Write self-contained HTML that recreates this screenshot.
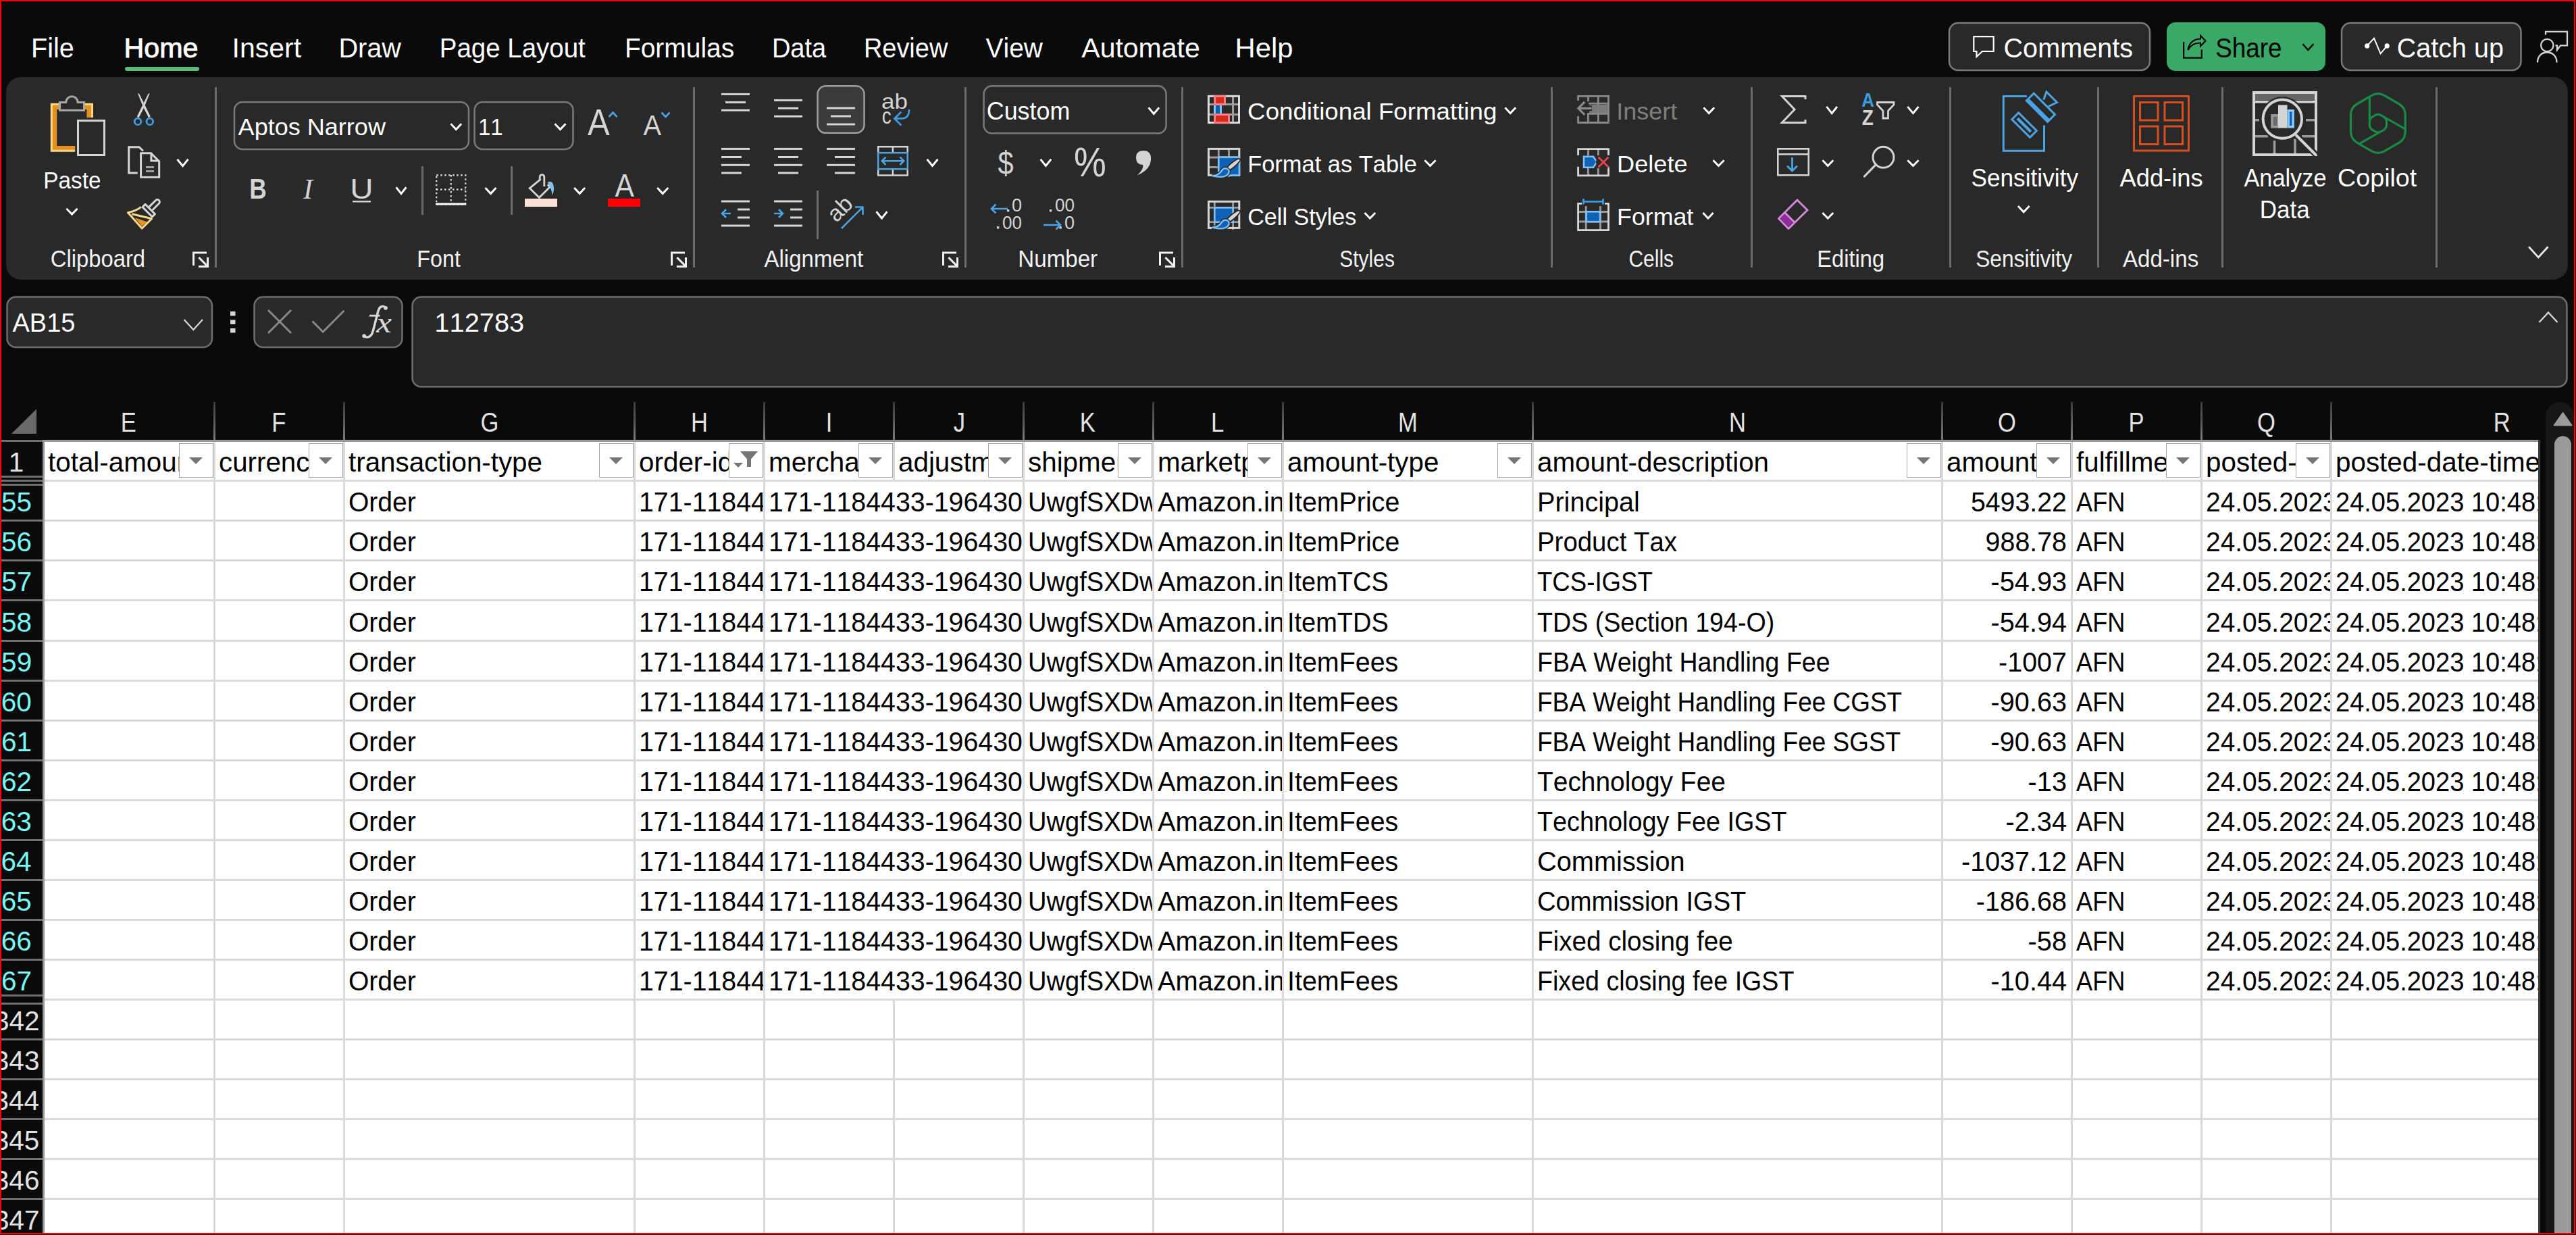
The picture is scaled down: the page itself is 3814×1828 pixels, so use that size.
<!DOCTYPE html>
<html><head><meta charset="utf-8"><style>
html,body{margin:0;padding:0;background:#0a0a0a;width:3814px;height:1828px;overflow:hidden}
svg{display:block;font-family:"Liberation Sans",sans-serif;font-kerning:none}
text{white-space:pre}
</style></head><body>
<svg width="3814" height="1828" viewBox="0 0 3814 1828">
<rect x="0" y="0" width="3814" height="1828" fill="#0a0a0a" />
<rect x="9" y="114" width="3793" height="300" rx="22" fill="#292929"/>
<text x="46.06" y="85.10" font-size="40.99" fill="#ffffff" textLength="63.70" lengthAdjust="spacingAndGlyphs" >File</text>
<text x="343.62" y="85.10" font-size="40.99" fill="#ffffff" >Insert</text>
<text x="501.45" y="85.10" font-size="40.99" fill="#ffffff" textLength="92.45" lengthAdjust="spacingAndGlyphs" >Draw</text>
<text x="650.85" y="85.10" font-size="40.99" fill="#ffffff" textLength="215.94" lengthAdjust="spacingAndGlyphs" >Page Layout</text>
<text x="924.91" y="85.10" font-size="40.99" fill="#ffffff" textLength="162.30" lengthAdjust="spacingAndGlyphs" >Formulas</text>
<text x="1142.88" y="85.10" font-size="40.99" fill="#ffffff" textLength="80.32" lengthAdjust="spacingAndGlyphs" >Data</text>
<text x="1278.89" y="85.10" font-size="40.99" fill="#ffffff" textLength="124.42" lengthAdjust="spacingAndGlyphs" >Review</text>
<text x="1459.53" y="85.10" font-size="40.99" fill="#ffffff" textLength="84.38" lengthAdjust="spacingAndGlyphs" >View</text>
<text x="1601.32" y="85.10" font-size="40.99" fill="#ffffff" >Automate</text>
<text x="1828.57" y="85.10" font-size="40.99" fill="#ffffff" textLength="85.88" lengthAdjust="spacingAndGlyphs" >Help</text>
<text x="183.42" y="85.10" font-size="39.83" fill="#ffffff" textLength="110.02" lengthAdjust="spacingAndGlyphs" stroke="#ffffff" stroke-width="0.9">Home</text>
<rect x="185" y="99" width="110" height="6" rx="3" fill="#5fb97a"/>
<rect x="2886" y="34" width="297" height="70" rx="13" fill="#292929" stroke="#7a7a7a" stroke-width="2.5"/>
<text x="2966.49" y="84.70" font-size="40.70" fill="#fff" textLength="191.54" lengthAdjust="spacingAndGlyphs" >Comments</text>
<path d="M2922.3 54.2 H2951.7 V76 H2935 L2926.5 84 V76 H2922.3 Z" fill="none" stroke="#fff" stroke-width="2.2"/>
<rect x="3208" y="33" width="235" height="72" rx="13" fill="#3aa866"/>
<text x="3280.23" y="84.70" font-size="40.70" fill="#000" textLength="98.41" lengthAdjust="spacingAndGlyphs" >Share</text>
<path d="M3233.1 62 V85.6 H3259.8 V73.5" fill="none" stroke="#000" stroke-width="2.2"/>
<path d="M3239.5 74 C3241 62 3250 57.5 3258 57.5 V52.5 L3265.5 60.5 L3258 68.5 V63.5 C3250 63.5 3243 67 3239.5 74 Z" fill="none" stroke="#000" stroke-width="2" stroke-linejoin="miter"/>
<path d="M3410.2 66.0 L3417.3 74.0 L3424.5 66.0" fill="none" stroke="#000" stroke-width="2.4" stroke-linecap="square" stroke-linejoin="miter"/>
<rect x="3467" y="34" width="265.5" height="70" rx="13" fill="#292929" stroke="#7a7a7a" stroke-width="2.5"/>
<text x="3548.69" y="84.80" font-size="39.97" fill="#fff" textLength="158.27" lengthAdjust="spacingAndGlyphs" >Catch up</text>
<path d="M3504.7 67.9 L3515 56.6 L3524.6 79.3 L3534.2 67.9" fill="none" stroke="#fff" stroke-width="2"/>
<circle cx="3504.7" cy="67.9" r="3.6" fill="#fff"/><circle cx="3534.2" cy="67.9" r="3.6" fill="#fff"/>
<g fill="none" stroke="#d6d6d6" stroke-width="2.3"><circle cx="3771.3" cy="67" r="9.2"/><path d="M3757 92.5 C3757 83 3763 77.5 3771.3 77.5 C3779.5 77.5 3785.5 83 3785.5 92.5"/><path d="M3769 51.5 V46.8 H3801 V67.3 H3791 L3786 74 V67.3 H3783.5"/></g>
<rect x="318" y="129" width="3" height="267" fill="#6b6b6b" />
<rect x="1026" y="129" width="3" height="267" fill="#6b6b6b" />
<rect x="1428" y="129" width="3" height="267" fill="#6b6b6b" />
<rect x="1749" y="129" width="3" height="267" fill="#6b6b6b" />
<rect x="2296" y="129" width="3" height="267" fill="#6b6b6b" />
<rect x="2592" y="129" width="3" height="267" fill="#6b6b6b" />
<rect x="2886" y="129" width="3" height="267" fill="#6b6b6b" />
<rect x="3105" y="129" width="3" height="267" fill="#6b6b6b" />
<rect x="3289" y="129" width="3" height="267" fill="#6b6b6b" />
<rect x="3606" y="129" width="3" height="267" fill="#6b6b6b" />
<rect x="624" y="246" width="3" height="72" fill="#6b6b6b" />
<rect x="756" y="246" width="3" height="72" fill="#6b6b6b" />
<rect x="1209" y="282" width="3" height="72" fill="#6b6b6b" />
<text x="74.84" y="395.00" font-size="34.30" fill="#f2f2f2" textLength="140.28" lengthAdjust="spacingAndGlyphs" >Clipboard</text>
<text x="617.36" y="395.00" font-size="34.30" fill="#f2f2f2" textLength="64.48" lengthAdjust="spacingAndGlyphs" >Font</text>
<text x="1131.54" y="395.00" font-size="34.30" fill="#f2f2f2" textLength="146.71" lengthAdjust="spacingAndGlyphs" >Alignment</text>
<text x="1507.28" y="395.00" font-size="34.30" fill="#f2f2f2" textLength="117.87" lengthAdjust="spacingAndGlyphs" >Number</text>
<text x="1983.34" y="395.00" font-size="34.30" fill="#f2f2f2" textLength="81.54" lengthAdjust="spacingAndGlyphs" >Styles</text>
<text x="2411.48" y="395.00" font-size="34.30" fill="#f2f2f2" textLength="66.60" lengthAdjust="spacingAndGlyphs" >Cells</text>
<text x="2690.32" y="395.00" font-size="34.30" fill="#f2f2f2" textLength="99.78" lengthAdjust="spacingAndGlyphs" >Editing</text>
<text x="2925.16" y="395.00" font-size="34.30" fill="#f2f2f2" textLength="142.90" lengthAdjust="spacingAndGlyphs" >Sensitivity</text>
<text x="3142.94" y="395.00" font-size="34.30" fill="#f2f2f2" textLength="112.26" lengthAdjust="spacingAndGlyphs" >Add-ins</text>
<path d="M286.5 393.0 V374.0 H306.0" fill="none" stroke="#f0f0f0" stroke-width="3" stroke-linejoin="miter"/>
<path d="M294.4 381.1 L307.0 393.7" stroke="#f0f0f0" stroke-width="3"/>
<path d="M307.5 381.0 V394.5 H293.9" fill="none" stroke="#f0f0f0" stroke-width="3" stroke-linejoin="miter"/>
<path d="M994.5 393.0 V374.0 H1014.0" fill="none" stroke="#f0f0f0" stroke-width="3" stroke-linejoin="miter"/>
<path d="M1002.4 381.1 L1015.0 393.7" stroke="#f0f0f0" stroke-width="3"/>
<path d="M1015.5 381.0 V394.5 H1001.9" fill="none" stroke="#f0f0f0" stroke-width="3" stroke-linejoin="miter"/>
<path d="M1396.5 393.0 V374.0 H1416.0" fill="none" stroke="#f0f0f0" stroke-width="3" stroke-linejoin="miter"/>
<path d="M1404.4 381.1 L1417.0 393.7" stroke="#f0f0f0" stroke-width="3"/>
<path d="M1417.5 381.0 V394.5 H1403.9" fill="none" stroke="#f0f0f0" stroke-width="3" stroke-linejoin="miter"/>
<path d="M1717.5 393.0 V374.0 H1737.0" fill="none" stroke="#f0f0f0" stroke-width="3" stroke-linejoin="miter"/>
<path d="M1725.4 381.1 L1738.0 393.7" stroke="#f0f0f0" stroke-width="3"/>
<path d="M1738.5 381.0 V394.5 H1724.9" fill="none" stroke="#f0f0f0" stroke-width="3" stroke-linejoin="miter"/>
<path d="M74.8 152.7 H138 V174 H128.7 V162 H84.1 V216 H111.1 V224.8 H74.8 Z" fill="#f8d98a"/>
<path d="M77.8 155.7 H135 V174 H128.7 V162 H84.1 V216 H111.1 V221.8 H77.8 Z" fill="#e3901f"/>
<path d="M88.5 163.2 V151.5 H97.7 A8.7 8.7 0 0 1 115.1 151.5 H124.5 V163.2 Z" fill="#292929" stroke="#a8a8a8" stroke-width="3"/>
<rect x="115.5" y="178.5" width="39" height="51" fill="#292929" stroke="#d4d4d4" stroke-width="3"/>
<text x="64.27" y="278.70" font-size="35.90" fill="#fff" textLength="85.21" lengthAdjust="spacingAndGlyphs" >Paste</text>
<path d="M99.5 309.9 L106.5 317.1 L113.5 309.9" fill="none" stroke="#fff" stroke-width="2.9" stroke-linecap="square" stroke-linejoin="miter"/>
<path d="M203.8 137.8 L206.2 139 L215 156.5 L222.8 172.6 L220.2 174.4 L211.6 157.6 Z" fill="#d6d6d6"/>
<path d="M221.8 137.8 L219.4 139 L210.6 156.5 L202.8 172.6 L205.4 174.4 L214 157.6 Z" fill="#d6d6d6"/>
<g fill="none" stroke="#3d9be0" stroke-width="2.9"><circle cx="204" cy="179.9" r="4.8"/><circle cx="221.8" cy="179.9" r="4.8"/></g>
<path d="M203.7 256 H190.7 V217.7 H206 L212 223.5" fill="none" stroke="#d6d6d6" stroke-width="3"/>
<path d="M208.6 226.7 H223.5 L235.7 238.9 V262.3 H208.6 Z" fill="none" stroke="#d6d6d6" stroke-width="3"/>
<path d="M223.9 226 V238 H236" fill="none" stroke="#d6d6d6" stroke-width="3"/>
<path d="M216 247.5 H228 M216 253.5 H228" stroke="#a0a0a0" stroke-width="2.8"/>
<path d="M263.4 236.9 L270.5 245.6 L277.6 236.9" fill="none" stroke="#fff" stroke-width="2.9" stroke-linecap="square" stroke-linejoin="miter"/>
<g transform="translate(220.2 311.65) rotate(-45)" fill="none" stroke-linejoin="round"><path d="M-21.7 -5.5 L-14.1 10 L-23 8.9 Z" fill="#e8941f" stroke="#e8941f" stroke-width="1"/><path d="M-4.35 -11.7 Q-13 -12.5 -23.9 -19.6 L-25.7 11.6 L-4.35 11.7 M-21.2 -14 L-5.1 12" stroke="#f5d88a" stroke-width="3"/><rect x="-2.85" y="-10.2" width="5.7" height="20.4" stroke="#d6d6d6" stroke-width="3"/><path d="M4.35 -3.4 H18.1 A3.4 3.4 0 0 1 18.1 3.4 H4.35" stroke="#d6d6d6" stroke-width="3"/></g>
<rect x="347" y="151" width="347" height="70" rx="12" fill="#292929" stroke="#7a7a7a" stroke-width="2.5"/>
<text x="352.63" y="200.40" font-size="35.76" fill="#fff" textLength="218.28" lengthAdjust="spacingAndGlyphs" >Aptos Narrow</text>
<path d="M668.5 184.4 L675.3 191.6 L682.1 184.4" fill="none" stroke="#fff" stroke-width="2.9" stroke-linecap="square" stroke-linejoin="miter"/>
<rect x="702.5" y="151" width="146" height="70" rx="12" fill="#292929" stroke="#7a7a7a" stroke-width="2.5"/>
<text x="707.88" y="200.40" font-size="35.76" fill="#fff" textLength="36.73" lengthAdjust="spacingAndGlyphs" >11</text>
<path d="M822.5 184.4 L829.5 191.6 L836.5 184.4" fill="none" stroke="#fff" stroke-width="2.9" stroke-linecap="square" stroke-linejoin="miter"/>
<text x="869.90" y="200.40" font-size="54.80" fill="#d4d4d4" textLength="32.69" lengthAdjust="spacingAndGlyphs" >A</text>
<path d="M901.5 173 L907.5 166.5 L913.5 173" fill="none" stroke="#4ba3e3" stroke-width="2.6"/>
<text x="952.52" y="200.40" font-size="42.01" fill="#d4d4d4" textLength="26.56" lengthAdjust="spacingAndGlyphs" >A</text>
<path d="M979.5 166.5 L985.5 173 L991.5 166.5" fill="none" stroke="#4ba3e3" stroke-width="2.6"/>
<text x="369.14" y="293.70" font-size="43.17" fill="#d4d4d4" font-weight="bold" textLength="25.46" lengthAdjust="spacingAndGlyphs" >B</text>
<text x="449" y="293.7" font-size="42" fill="#d4d4d4" font-family="Liberation Serif" font-style="italic">I</text>
<text x="518.33" y="293.70" font-size="42.88" fill="#d4d4d4" textLength="34.34" lengthAdjust="spacingAndGlyphs" >U</text>
<rect x="522" y="297" width="27" height="2.5" fill="#d4d4d4" />
<path d="M587.5 278.4 L594.0 286.6 L600.5 278.4" fill="none" stroke="#fff" stroke-width="2.9" stroke-linecap="square" stroke-linejoin="miter"/>
<g fill="none" stroke="#d4d4d4" stroke-width="2.4" stroke-dasharray="2.5 3.5"><rect x="646.2" y="259.2" width="43" height="43"/><path d="M667.7 259 V302 M646 280.5 H689"/></g>
<rect x="645" y="300.5" width="45" height="3" fill="#ffffff" />
<path d="M719.5 279.1 L726.5 286.6 L733.5 279.1" fill="none" stroke="#fff" stroke-width="2.9" stroke-linecap="square" stroke-linejoin="miter"/>
<path d="M800.6 265.2 L784.2 278.6 L798.4 292.6 L814.2 276.8 L810.8 273.2" fill="none" stroke="#d4d4d4" stroke-width="2.8" stroke-linejoin="miter"/>
<path d="M799.2 266.5 V261.9 A3.3 3.3 0 0 1 805.8 261.9 V276" fill="none" stroke="#d4d4d4" stroke-width="2.8"/>
<path d="M810.5 270 Q818 265.5 819.9 276 Q820.6 284 817.6 289 Q816.8 278.5 810.5 270 Z" fill="#7fc1f0"/>
<rect x="777" y="294" width="48" height="12" fill="#fbe2d5" />
<path d="M851.2 279.1 L858.2 286.6 L865.1 279.1" fill="none" stroke="#fff" stroke-width="2.9" stroke-linecap="square" stroke-linejoin="miter"/>
<text x="910.62" y="290.70" font-size="47.53" fill="#d4d4d4" textLength="28.37" lengthAdjust="spacingAndGlyphs" >A</text>
<rect x="900" y="294" width="48" height="12" fill="#ff0000" />
<path d="M974.2 279.1 L981.2 286.6 L988.3 279.1" fill="none" stroke="#fff" stroke-width="2.9" stroke-linecap="square" stroke-linejoin="miter"/>
<rect x="1068" y="137.9" width="42" height="3" fill="#d4d4d4" />
<rect x="1074" y="149.9" width="30" height="3" fill="#d4d4d4" />
<rect x="1068" y="161.7" width="42" height="3" fill="#d4d4d4" />
<rect x="1146" y="146.9" width="42" height="3" fill="#d4d4d4" />
<rect x="1152" y="158.7" width="30" height="3" fill="#d4d4d4" />
<rect x="1146" y="170.7" width="42" height="3" fill="#d4d4d4" />
<rect x="1210.5" y="127.3" width="69" height="69.5" rx="12" fill="#3b3b3b" stroke="#9e9e9e" stroke-width="2.5"/>
<rect x="1224" y="158.5" width="42" height="3" fill="#d4d4d4" />
<rect x="1230" y="170.5" width="30" height="3" fill="#d4d4d4" />
<rect x="1224" y="182.5" width="42" height="3" fill="#d4d4d4" />
<text x="1305.01" y="161.00" font-size="31.50" fill="#d4d4d4" textLength="38.96" lengthAdjust="spacingAndGlyphs" >ab</text>
<text x="1305.82" y="182.50" font-size="33.00" fill="#d4d4d4" textLength="13.92" lengthAdjust="spacingAndGlyphs" >c</text>
<path d="M1325.5 175.4 H1335 Q1346 175.4 1346 162" fill="none" stroke="#3d9be0" stroke-width="2.8"/><path d="M1334.3 165.4 L1324.5 175.4 L1334.3 185.4" fill="none" stroke="#3d9be0" stroke-width="2.8"/>
<rect x="1068" y="218.9" width="42" height="3" fill="#d4d4d4" />
<rect x="1068" y="231" width="30" height="3" fill="#d4d4d4" />
<rect x="1068" y="242.8" width="42" height="3" fill="#d4d4d4" />
<rect x="1068" y="254.5" width="30" height="3" fill="#d4d4d4" />
<rect x="1146" y="218.9" width="42" height="3" fill="#d4d4d4" />
<rect x="1152" y="231" width="30" height="3" fill="#d4d4d4" />
<rect x="1146" y="242.8" width="42" height="3" fill="#d4d4d4" />
<rect x="1152" y="254.5" width="30" height="3" fill="#d4d4d4" />
<rect x="1224" y="218.9" width="42" height="3" fill="#d4d4d4" />
<rect x="1236" y="231" width="30" height="3" fill="#d4d4d4" />
<rect x="1224" y="242.8" width="42" height="3" fill="#d4d4d4" />
<rect x="1236" y="254.5" width="30" height="3" fill="#d4d4d4" />
<g fill="none" stroke="#d4d4d4" stroke-width="2.5"><rect x="1300.2" y="217.2" width="43.5" height="42.3"/><path d="M1321.9 217 V226 M1321.9 250 V260"/></g>
<rect x="1300.2" y="226.2" width="43.5" height="24" fill="#292929" stroke="#4ba3e3" stroke-width="2.5"/>
<path d="M1306 238.2 H1338 M1311.5 232.5 L1305.8 238.2 L1311.5 244 M1332.5 232.5 L1338.2 238.2 L1332.5 244" fill="none" stroke="#4ba3e3" stroke-width="2.5"/>
<path d="M1373.5 236.9 L1380.5 245.4 L1387.5 236.9" fill="none" stroke="#fff" stroke-width="2.9" stroke-linecap="square" stroke-linejoin="miter"/>
<rect x="1068" y="296.5" width="42" height="3" fill="#d4d4d4" />
<rect x="1068" y="332.5" width="42" height="3" fill="#d4d4d4" />
<rect x="1092" y="308.5" width="18" height="3" fill="#d4d4d4" />
<rect x="1092" y="320.5" width="18" height="3" fill="#d4d4d4" />
<path d="M1069 316 H1082 M1075 310 L1069 316 L1075 322" fill="none" stroke="#4ba3e3" stroke-width="2.6"/>
<rect x="1146" y="296.5" width="42" height="3" fill="#d4d4d4" />
<rect x="1146" y="332.5" width="42" height="3" fill="#d4d4d4" />
<rect x="1170" y="308.5" width="18" height="3" fill="#d4d4d4" />
<rect x="1170" y="320.5" width="18" height="3" fill="#d4d4d4" />
<path d="M1146 316 H1159 M1153 310 L1159 316 L1153 322" fill="none" stroke="#4ba3e3" stroke-width="2.6"/>
<text x="0" y="0" font-size="33.8" fill="#d4d4d4" transform="translate(1238.3 330.3) rotate(-45)">ab</text>
<path d="M1246 338 L1277 307 M1266 306.5 H1277.5 V318" fill="none" stroke="#4ba3e3" stroke-width="2.6"/>
<path d="M1298.5 314.4 L1305.5 323.2 L1312.5 314.4" fill="none" stroke="#fff" stroke-width="2.9" stroke-linecap="square" stroke-linejoin="miter"/>
<rect x="1456.6" y="127.3" width="270" height="70" rx="12" fill="#292929" stroke="#7a7a7a" stroke-width="2.5"/>
<text x="1460.78" y="177.30" font-size="36.77" fill="#fff" textLength="123.59" lengthAdjust="spacingAndGlyphs" >Custom</text>
<path d="M1701.5 160.4 L1708.3 168.4 L1715.2 160.4" fill="none" stroke="#fff" stroke-width="2.9" stroke-linecap="square" stroke-linejoin="miter"/>
<text x="1477.55" y="258.40" font-size="47.97" fill="#d4d4d4" textLength="23.12" lengthAdjust="spacingAndGlyphs" >$</text>
<path d="M1541.5 236.9 L1548.4 245.4 L1555.3 236.9" fill="none" stroke="#fff" stroke-width="2.9" stroke-linecap="square" stroke-linejoin="miter"/>
<text x="1590.08" y="260.60" font-size="61.05" fill="#d4d4d4" textLength="47.84" lengthAdjust="spacingAndGlyphs" >%</text>
<path d="M1693 223 Q1705 223 1704 237 Q1702.5 252 1683.5 259.5 Q1694 250 1692 244 Q1682 244 1682 233.5 Q1682 223 1693 223 Z" fill="#d4d4d4"/>
<text x="1497.94" y="313.40" font-size="27.62" fill="#d4d4d4" textLength="15.12" lengthAdjust="spacingAndGlyphs" >0</text>
<rect x="1490.9" y="310" width="3.4" height="3.4" fill="#d4d4d4" />
<text x="1483.98" y="338.50" font-size="28.34" fill="#d4d4d4" textLength="14.54" lengthAdjust="spacingAndGlyphs" >0</text>
<text x="1498.48" y="338.50" font-size="28.34" fill="#d4d4d4" textLength="14.54" lengthAdjust="spacingAndGlyphs" >0</text>
<rect x="1475.9" y="335.1" width="3.4" height="3.4" fill="#d4d4d4" />
<path d="M1468 309 H1492 M1474.5 302.5 L1468 309 L1474.5 315.5" fill="none" stroke="#4ba3e3" stroke-width="2.6"/>
<text x="1561.98" y="313.40" font-size="27.62" fill="#d4d4d4" textLength="14.54" lengthAdjust="spacingAndGlyphs" >0</text>
<text x="1576.48" y="313.40" font-size="27.62" fill="#d4d4d4" textLength="14.54" lengthAdjust="spacingAndGlyphs" >0</text>
<rect x="1553.9" y="310" width="3.4" height="3.4" fill="#d4d4d4" />
<text x="1575.94" y="338.50" font-size="28.34" fill="#d4d4d4" textLength="15.12" lengthAdjust="spacingAndGlyphs" >0</text>
<rect x="1568.4" y="335.1" width="3.4" height="3.4" fill="#d4d4d4" />
<path d="M1545 333 H1570 M1563.5 326.5 L1570 333 L1563.5 339.5" fill="none" stroke="#4ba3e3" stroke-width="2.6"/>
<g fill="none"><path d="M1789 154.5 H1835 M1789 169.5 H1835 M1825.5 142 V182" stroke="#9e9e9e" stroke-width="3"/><rect x="1789.4" y="142.3" width="45.1" height="39.3" stroke="#dcdcdc" stroke-width="3"/></g>
<rect x="1798.6" y="142.3" width="14.9" height="11.9" fill="#d42a1a" stroke="#ff7b85" stroke-width="3"/>
<rect x="1798.6" y="169.7" width="20.9" height="11.9" fill="#d42a1a" stroke="#ff7b85" stroke-width="3"/>
<rect x="1797.1" y="155.9" width="11.8" height="12.2" fill="#0062b1"/>
<rect x="1797.1" y="155.9" width="2.8" height="12.2" fill="#8ccbf5" />
<rect x="1806.1" y="155.9" width="2.8" height="12.2" fill="#8ccbf5" />
<text x="1847.14" y="177.30" font-size="35.76" fill="#fff" textLength="369.23" lengthAdjust="spacingAndGlyphs" >Conditional Formatting</text>
<path d="M2229.4 160.4 L2236.2 167.6 L2243.1 160.4" fill="none" stroke="#fff" stroke-width="2.9" stroke-linecap="square" stroke-linejoin="miter"/>
<g fill="none"><path d="M1789 233 H1835 M1789 247.5 H1835 M1804.3 220 V262 M1819.5 220 V262" stroke="#9a9a9a" stroke-width="2.8"/><rect x="1789.4" y="220.4" width="45.4" height="38.9" stroke="#d6d6d6" stroke-width="3"/></g>
<rect x="1804.3" y="232.6" width="30.6" height="26.9" fill="#0f62b8" stroke="#7fc1f0" stroke-width="2.6"/>
<g transform="translate(0 0)"><ellipse cx="1824.8" cy="244.8" rx="15.5" ry="4.6" transform="rotate(-40 1824.8 244.8)" fill="#292929"/><ellipse cx="1825.3" cy="244.3" rx="13" ry="2.6" transform="rotate(-40 1825.3 244.3)" fill="#d6d6d6"/><path d="M1794.5 260.2 Q1804 260 1808.5 253 Q1811.5 248 1816.5 249.5 Q1821.5 252 1818.5 257.5 Q1813 264.5 1794.5 260.2 Z" fill="#0f62b8" stroke="#292929" stroke-width="5"/><path d="M1794.5 260.2 Q1804 260 1808.5 253 Q1811.5 248 1816.5 249.5 Q1821.5 252 1818.5 257.5 Q1813 264.5 1794.5 260.2 Z" fill="#0f62b8" stroke="#7fc1f0" stroke-width="2.4"/></g>
<text x="1847.17" y="255.00" font-size="35.76" fill="#fff" textLength="250.76" lengthAdjust="spacingAndGlyphs" >Format as Table</text>
<path d="M2110.4 238.2 L2117.5 245.4 L2124.6 238.2" fill="none" stroke="#fff" stroke-width="2.9" stroke-linecap="square" stroke-linejoin="miter"/>
<g fill="none"><path d="M1789 307.4 H1835 M1789 328.7 H1835 M1798.3 298 V340 M1825.6 298 V340" stroke="#9a9a9a" stroke-width="2.8"/><rect x="1789.4" y="298.3" width="45.4" height="39.1" stroke="#d6d6d6" stroke-width="3"/></g>
<rect x="1798.3" y="307.4" width="27.3" height="21.3" fill="#0f62b8" stroke="#7fc1f0" stroke-width="2.6"/>
<g transform="translate(0 76.5)"><ellipse cx="1824.8" cy="244.8" rx="15.5" ry="4.6" transform="rotate(-40 1824.8 244.8)" fill="#292929"/><ellipse cx="1825.3" cy="244.3" rx="13" ry="2.6" transform="rotate(-40 1825.3 244.3)" fill="#d6d6d6"/><path d="M1794.5 260.2 Q1804 260 1808.5 253 Q1811.5 248 1816.5 249.5 Q1821.5 252 1818.5 257.5 Q1813 264.5 1794.5 260.2 Z" fill="#0f62b8" stroke="#292929" stroke-width="5"/><path d="M1794.5 260.2 Q1804 260 1808.5 253 Q1811.5 248 1816.5 249.5 Q1821.5 252 1818.5 257.5 Q1813 264.5 1794.5 260.2 Z" fill="#0f62b8" stroke="#7fc1f0" stroke-width="2.4"/></g>
<text x="1847.27" y="333.00" font-size="35.76" fill="#fff" textLength="160.96" lengthAdjust="spacingAndGlyphs" >Cell Styles</text>
<path d="M2021.5 316.1 L2028.3 323.2 L2035.2 316.1" fill="none" stroke="#fff" stroke-width="2.9" stroke-linecap="square" stroke-linejoin="miter"/>
<g fill="none" stroke="#8a8a8a" stroke-width="2.8"><path d="M2336.6 149 V142.4 H2381.5 V181.5 H2336.6 V172 M2351.4 142 V150 M2351.4 167 V182 M2366.3 142 V182 M2352 153.2 H2382 M2352 168.3 H2382"/></g>
<rect x="2367.7" y="155" width="12.3" height="12.4" fill="#7a7a7a" />
<rect x="2353" y="155" width="13" height="12" fill="#7a7a7a" />
<path d="M2336.5 160.3 H2357" stroke="#292929" stroke-width="8"/><path d="M2346 150.5 L2336.5 160.3 L2346 170" fill="none" stroke="#292929" stroke-width="8"/>
<path d="M2337 160.3 H2356.5 M2346.2 150.8 L2336.8 160.3 L2346.2 169.8" fill="none" stroke="#8a8a8a" stroke-width="3.2"/>
<text x="2393.38" y="177.30" font-size="35.76" fill="#7f7f7f" textLength="89.88" lengthAdjust="spacingAndGlyphs" >Insert</text>
<path d="M2523.4 160.4 L2530.2 167.6 L2537.1 160.4" fill="none" stroke="#fff" stroke-width="2.9" stroke-linecap="square" stroke-linejoin="miter"/>
<g fill="none"><path d="M2351.4 220 V230 M2366.3 220 V230 M2351.4 249 V260 M2366.3 249 V260" stroke="#9a9a9a" stroke-width="2.8"/><path d="M2336.6 229.7 V220.6 H2381.5 V229.7 M2336.6 246.7 V259.8 H2381.5 V246.7" stroke="#d6d6d6" stroke-width="2.8"/></g>
<path d="M2345 231.8 H2359 L2364.5 239.8 L2359 247.8 H2345 Z" fill="#0f62b8" stroke="#7fc1f0" stroke-width="2.6"/>
<circle cx="2374" cy="240" r="11" fill="#292929"/>
<path d="M2366.5 232.5 L2381.5 247.5 M2381.5 232.5 L2366.5 247.5" stroke="#e8474b" stroke-width="2.8"/>
<text x="2394.03" y="255.00" font-size="35.76" fill="#fff" textLength="104.58" lengthAdjust="spacingAndGlyphs" >Delete</text>
<path d="M2537.4 238.2 L2544.5 245.4 L2551.6 238.2" fill="none" stroke="#fff" stroke-width="2.9" stroke-linecap="square" stroke-linejoin="miter"/>
<g fill="none"><path d="M2336 313.5 H2382 M2336 328 H2382 M2348.2 305 V341 M2369.5 305 V341" stroke="#9a9a9a" stroke-width="2.8"/><path d="M2342 301.4 H2336.6 V340.6 H2381.5 V301.4 H2376" stroke="#d6d6d6" stroke-width="2.8"/></g>
<path d="M2344.5 298.3 H2373.5 M2344.5 294.2 V302.5 M2373.5 294.2 V302.5" fill="none" stroke="#3d9be0" stroke-width="2.8"/>
<rect x="2348.6" y="313.3" width="20.5" height="14.9" fill="#0f62b8" stroke="#7fc1f0" stroke-width="2.6"/>
<text x="2394.07" y="333.00" font-size="35.76" fill="#fff" >Format</text>
<path d="M2522.4 316.1 L2529.0 323.2 L2535.6 316.1" fill="none" stroke="#fff" stroke-width="2.9" stroke-linecap="square" stroke-linejoin="miter"/>
<path d="M2673 147 V142.5 H2638.5 L2657 162 L2638.5 181.5 H2673 V177" fill="none" stroke="#d4d4d4" stroke-width="3"/>
<path d="M2705.4 159.1 L2712.2 167.6 L2719.1 159.1" fill="none" stroke="#fff" stroke-width="2.9" stroke-linecap="square" stroke-linejoin="miter"/>
<text x="2756.35" y="157.70" font-size="28.63" fill="#3d9be0" font-weight="bold" textLength="18.84" lengthAdjust="spacingAndGlyphs" >A</text>
<text x="2756.66" y="185.30" font-size="30.52" fill="#d4d4d4" font-weight="bold" textLength="17.14" lengthAdjust="spacingAndGlyphs" >Z</text>
<path d="M2779.5 151.5 H2804 V155 L2795.5 164 V175 H2788 V164 L2779.5 155 Z" fill="none" stroke="#d4d4d4" stroke-width="2.8"/>
<path d="M2825.4 159.1 L2832.5 167.6 L2839.6 159.1" fill="none" stroke="#fff" stroke-width="2.9" stroke-linecap="square" stroke-linejoin="miter"/>
<rect x="2632.3" y="220.3" width="45.5" height="39" fill="none" stroke="#d4d4d4" stroke-width="2.6"/>
<rect x="2632" y="227" width="46" height="2.6" fill="#d4d4d4" />
<path d="M2653.5 233 V253 M2646 245.5 L2653.5 253 L2661 245.5" fill="none" stroke="#4ba3e3" stroke-width="2.8"/>
<path d="M2699.4 238.2 L2706.3 245.4 L2713.2 238.2" fill="none" stroke="#fff" stroke-width="2.9" stroke-linecap="square" stroke-linejoin="miter"/>
<circle cx="2788.5" cy="232.8" r="15.5" fill="none" stroke="#d4d4d4" stroke-width="3"/><path d="M2777.5 243.5 L2760.5 261" stroke="#d4d4d4" stroke-width="3.2" stroke-linecap="round"/>
<path d="M2825.4 238.2 L2832.5 245.4 L2839.6 238.2" fill="none" stroke="#fff" stroke-width="2.9" stroke-linecap="square" stroke-linejoin="miter"/>
<path d="M2633.5 323.4 L2661 296 L2676 311 L2648 338.5 Z" fill="none" stroke="#d68bdc" stroke-width="2.8" stroke-linejoin="miter"/>
<path d="M2635.5 323.4 L2643.5 315.4 L2656 327.9 L2648 335.9 Z" fill="#8e2c99"/>
<path d="M2643 315 L2657 329" stroke="#d68bdc" stroke-width="2.6"/>
<path d="M2699.4 316.1 L2706.3 323.2 L2713.2 316.1" fill="none" stroke="#fff" stroke-width="2.9" stroke-linecap="square" stroke-linejoin="miter"/>
<path d="M3001 142.5 H2966.3 V223.3 H3026.5 V185.5" fill="none" stroke="#4ba3e3" stroke-width="3"/>
<g transform="rotate(45 2997.1 185.1)" fill="none" stroke="#4ba3e3" stroke-width="3"><rect x="2978.2" y="178.1" width="37.8" height="14"/></g>
<g transform="rotate(45 2997.1 185.1)"><rect x="2983" y="183" width="28" height="4.4" fill="#4ba3e3"/></g>
<g transform="rotate(45 3021.4 159.3)"><rect x="2999.3" y="151.5" width="44.2" height="15.5" fill="#292929" stroke="#4ba3e3" stroke-width="3"/><rect x="2999.3" y="162" width="44.2" height="5" fill="#4ba3e3"/></g>
<path d="M3025.8 147.5 L3030 136 L3045.5 151.5 L3033 157.5" fill="none" stroke="#4ba3e3" stroke-width="3" stroke-linejoin="miter"/>
<text x="2918.40" y="275.60" font-size="36.63" fill="#fff" textLength="158.67" lengthAdjust="spacingAndGlyphs" >Sensitivity</text>
<path d="M2988.9 306.1 L2996.2 313.8 L3003.6 306.1" fill="none" stroke="#fff" stroke-width="2.9" stroke-linecap="square" stroke-linejoin="miter"/>
<g fill="none" stroke="#d94e1f" stroke-width="3"><rect x="3159.5" y="142.5" width="81" height="80.5"/><rect x="3168.5" y="151.5" width="26.5" height="26.5"/><rect x="3205" y="151.5" width="26.5" height="26.5"/><rect x="3168.5" y="187" width="26.5" height="26.5"/><rect x="3205" y="187" width="26.5" height="26.5"/></g>
<text x="3138.43" y="276.40" font-size="37.06" fill="#fff" textLength="123.28" lengthAdjust="spacingAndGlyphs" >Add-ins</text>
<rect x="3337" y="137" width="92" height="92" fill="none" stroke="#d4d4d4" stroke-width="4"/>
<rect x="3339" y="139" width="88" height="9.5" fill="#666666" />
<rect x="3339" y="149" width="88" height="3.5" fill="#d4d4d4" />
<g stroke="#9a9a9a" stroke-width="3.6"><path d="M3339 177.8 H3345 M3414 177.8 H3427 M3339 201.8 H3358 M3408 201.8 H3427 M3367.5 208 V227 M3398 205.5 V227"/></g>
<circle cx="3379.3" cy="176.1" r="30.5" fill="#292929" stroke="#292929" stroke-width="5"/>
<circle cx="3379.3" cy="176.1" r="28.7" fill="#292929" stroke="#d4d4d4" stroke-width="4"/>
<path d="M3400 200.5 L3430 230" stroke="#292929" stroke-width="9"/><path d="M3400 200.5 L3428.5 229" stroke="#d4d4d4" stroke-width="4" stroke-linecap="round"/>
<rect x="3364" y="170.8" width="9.1" height="17" fill="#6a6a6a" stroke="#9a9a9a" stroke-width="3.5"/>
<rect x="3373" y="155.4" width="13.5" height="34.1" fill="#d4d4d4" />
<rect x="3388.2" y="163.8" width="7" height="24" fill="#0f62b8" stroke="#8cc8f5" stroke-width="3.5"/>
<text x="3322.43" y="276.00" font-size="37.06" fill="#fff" textLength="122.09" lengthAdjust="spacingAndGlyphs" >Analyze</text>
<text x="3345.73" y="323.40" font-size="37.06" fill="#fff" textLength="73.87" lengthAdjust="spacingAndGlyphs" >Data</text>
<g fill="none" stroke="#1a8a47" stroke-width="3.2" stroke-linejoin="round" stroke-linecap="round"><path d="M3511.37 141.45 Q3520.90 135.95 3530.43 141.45 L3551.73 153.75 Q3561.26 159.25 3561.26 170.25 L3561.26 194.85 Q3561.26 205.85 3551.73 211.35 L3530.43 223.65 Q3520.90 229.15 3511.37 223.65 L3490.07 211.35 Q3480.54 205.85 3480.54 194.85 L3480.54 170.25 Q3480.54 159.25 3490.07 153.75 Z"/><path d="M3516.57 170.55 Q3520.90 168.05 3525.23 170.55 L3529.13 172.80 Q3533.46 175.30 3533.46 180.30 L3533.46 184.80 Q3533.46 189.80 3529.13 192.30 L3525.23 194.55 Q3520.90 197.05 3516.57 194.55 L3512.67 192.30 Q3508.34 189.80 3508.34 184.80 L3508.34 180.30 Q3508.34 175.30 3512.67 172.80 Z"/><path d="M3508.34 177.30 L3508.34 143.5 M3531.46 174.10 L3559.00 189.80 M3522.90 195.85 L3493.50 212.60"/></g>
<text x="3461.09" y="276.00" font-size="37.06" fill="#fff" textLength="117.19" lengthAdjust="spacingAndGlyphs" >Copilot</text>
<path d="M3745.1 366.4 L3758.3 380.9 L3771.6 366.4" fill="none" stroke="#e6e6e6" stroke-width="2.9" stroke-linecap="square" stroke-linejoin="miter"/>
<rect x="10.5" y="439.5" width="303.5" height="74.5" rx="13" fill="#292929" stroke="#6e6e6e" stroke-width="2.5"/>
<text x="18.53" y="491.20" font-size="39.53" fill="#fff" textLength="92.97" lengthAdjust="spacingAndGlyphs" >AB15</text>
<path d="M272.5 473 L286.3 488 L300 473" fill="none" stroke="#d6d6d6" stroke-width="2.2"/>
<rect x="341" y="461" width="7.5" height="6.5" fill="#d6d6d6" />
<rect x="341" y="473.5" width="7.5" height="6.5" fill="#d6d6d6" />
<rect x="341" y="486" width="7.5" height="6.5" fill="#d6d6d6" />
<rect x="376.5" y="439.5" width="219" height="74.5" rx="13" fill="#292929" stroke="#6e6e6e" stroke-width="2.5"/>
<path d="M397 459 L431 493 M431 459 L397 493" stroke="#8a8a8a" stroke-width="2.9"/>
<path d="M462.5 475.5 L478.2 491.2 L509.5 459.8" fill="none" stroke="#8a8a8a" stroke-width="2.9"/>
<path d="M571.5 455.5 C567 451.5 561.5 453 559.5 462 L552.5 489 C550 499 544.5 501 539 497.5" fill="none" stroke="#d8d8d8" stroke-width="3.4" stroke-linecap="round"/>
<circle cx="571" cy="455.8" r="2.9" fill="#d8d8d8"/><circle cx="539.2" cy="497.3" r="2.9" fill="#d8d8d8"/>
<path d="M547 467.2 H562.5" stroke="#d8d8d8" stroke-width="2.8"/>
<text x="557" y="492.4" font-size="44" fill="#d8d8d8" font-family="Liberation Serif" font-style="italic" textLength="23" lengthAdjust="spacingAndGlyphs">x</text>
<rect x="610.5" y="439.5" width="3190" height="133" rx="13" fill="#292929" stroke="#6e6e6e" stroke-width="2.5"/>
<text x="643.37" y="491.20" font-size="39.53" fill="#fff" textLength="132.88" lengthAdjust="spacingAndGlyphs" >112783</text>
<path d="M3759.5 477 L3773 462.5 L3786.5 477" fill="none" stroke="#d6d6d6" stroke-width="2.4"/>
<rect x="316" y="595" width="3" height="56" fill="url(#hg)"/>
<rect x="508" y="595" width="3" height="56" fill="url(#hg)"/>
<rect x="938" y="595" width="3" height="56" fill="url(#hg)"/>
<rect x="1130" y="595" width="3" height="56" fill="url(#hg)"/>
<rect x="1322" y="595" width="3" height="56" fill="url(#hg)"/>
<rect x="1514" y="595" width="3" height="56" fill="url(#hg)"/>
<rect x="1706" y="595" width="3" height="56" fill="url(#hg)"/>
<rect x="1898" y="595" width="3" height="56" fill="url(#hg)"/>
<rect x="2268" y="595" width="3" height="56" fill="url(#hg)"/>
<rect x="2874" y="595" width="3" height="56" fill="url(#hg)"/>
<rect x="3066" y="595" width="3" height="56" fill="url(#hg)"/>
<rect x="3258" y="595" width="3" height="56" fill="url(#hg)"/>
<rect x="3450" y="595" width="3" height="56" fill="url(#hg)"/>
<defs><linearGradient id="hg" x1="0" y1="0" x2="0" y2="1"><stop offset="0" stop-color="#3a3a3a"/><stop offset="1" stop-color="#7c7c7c"/></linearGradient></defs>
<text x="178.79" y="638.50" font-size="40.70" fill="#e2e2e2" textLength="23.07" lengthAdjust="spacingAndGlyphs">E</text>
<text x="402.21" y="638.50" font-size="40.70" fill="#e2e2e2" textLength="21.13" lengthAdjust="spacingAndGlyphs">F</text>
<text x="711.47" y="638.50" font-size="40.70" fill="#e2e2e2" textLength="26.91" lengthAdjust="spacingAndGlyphs">G</text>
<text x="1023.00" y="638.50" font-size="40.70" fill="#e2e2e2" textLength="24.98" lengthAdjust="spacingAndGlyphs">H</text>
<text x="1222.69" y="638.50" font-size="40.70" fill="#e2e2e2" textLength="9.61" lengthAdjust="spacingAndGlyphs">I</text>
<text x="1411.87" y="638.50" font-size="40.70" fill="#e2e2e2" textLength="17.30" lengthAdjust="spacingAndGlyphs">J</text>
<text x="1598.74" y="638.50" font-size="40.70" fill="#e2e2e2" textLength="23.07" lengthAdjust="spacingAndGlyphs">K</text>
<text x="1793.04" y="638.50" font-size="40.70" fill="#e2e2e2" textLength="19.24" lengthAdjust="spacingAndGlyphs">L</text>
<text x="2070.09" y="638.50" font-size="40.70" fill="#e2e2e2" textLength="28.82" lengthAdjust="spacingAndGlyphs">M</text>
<text x="2560.00" y="638.50" font-size="40.70" fill="#e2e2e2" textLength="24.98" lengthAdjust="spacingAndGlyphs">N</text>
<text x="2958.05" y="638.50" font-size="40.70" fill="#e2e2e2" textLength="26.91" lengthAdjust="spacingAndGlyphs">O</text>
<text x="3151.46" y="638.50" font-size="40.70" fill="#e2e2e2" textLength="23.07" lengthAdjust="spacingAndGlyphs">P</text>
<text x="3342.05" y="638.50" font-size="40.70" fill="#e2e2e2" textLength="26.91" lengthAdjust="spacingAndGlyphs">Q</text>
<text x="3691.69" y="638.50" font-size="40.70" fill="#e2e2e2" textLength="24.98" lengthAdjust="spacingAndGlyphs">R</text>
<path d="M17 642 L54 605.5 V642 Z" fill="#6a6a6a"/>
<rect x="0" y="651" width="66" height="3" fill="#707070" />
<rect x="66" y="651" width="3692" height="3" fill="#9a9a9a" />
<rect x="66" y="654" width="3692" height="1174" fill="#ffffff" />
<rect x="66" y="710" width="3692" height="3" fill="#dadada" />
<rect x="66" y="769" width="3692" height="3" fill="#dadada" />
<rect x="66" y="828" width="3692" height="3" fill="#dadada" />
<rect x="66" y="887" width="3692" height="3" fill="#dadada" />
<rect x="66" y="947" width="3692" height="3" fill="#dadada" />
<rect x="66" y="1006" width="3692" height="3" fill="#dadada" />
<rect x="66" y="1065" width="3692" height="3" fill="#dadada" />
<rect x="66" y="1124" width="3692" height="3" fill="#dadada" />
<rect x="66" y="1183" width="3692" height="3" fill="#dadada" />
<rect x="66" y="1242" width="3692" height="3" fill="#dadada" />
<rect x="66" y="1301" width="3692" height="3" fill="#dadada" />
<rect x="66" y="1360" width="3692" height="3" fill="#dadada" />
<rect x="66" y="1419" width="3692" height="3" fill="#dadada" />
<rect x="66" y="1478" width="3692" height="3" fill="#dadada" />
<rect x="66" y="1537" width="3692" height="3" fill="#dadada" />
<rect x="66" y="1596" width="3692" height="3" fill="#dadada" />
<rect x="66" y="1655" width="3692" height="3" fill="#dadada" />
<rect x="66" y="1714" width="3692" height="3" fill="#dadada" />
<rect x="66" y="1773" width="3692" height="3" fill="#dadada" />
<rect x="316" y="654" width="3" height="56" fill="#dadada" />
<rect x="316" y="710" width="3" height="59" fill="#dadada" />
<rect x="316" y="769" width="3" height="59" fill="#dadada" />
<rect x="316" y="828" width="3" height="59" fill="#dadada" />
<rect x="316" y="887" width="3" height="60" fill="#dadada" />
<rect x="316" y="947" width="3" height="59" fill="#dadada" />
<rect x="316" y="1006" width="3" height="59" fill="#dadada" />
<rect x="316" y="1065" width="3" height="59" fill="#dadada" />
<rect x="316" y="1124" width="3" height="59" fill="#dadada" />
<rect x="316" y="1183" width="3" height="59" fill="#dadada" />
<rect x="316" y="1242" width="3" height="59" fill="#dadada" />
<rect x="316" y="1301" width="3" height="59" fill="#dadada" />
<rect x="316" y="1360" width="3" height="59" fill="#dadada" />
<rect x="316" y="1419" width="3" height="59" fill="#dadada" />
<rect x="316" y="1478" width="3" height="59" fill="#dadada" />
<rect x="316" y="1537" width="3" height="59" fill="#dadada" />
<rect x="316" y="1596" width="3" height="59" fill="#dadada" />
<rect x="316" y="1655" width="3" height="59" fill="#dadada" />
<rect x="316" y="1714" width="3" height="59" fill="#dadada" />
<rect x="316" y="1773" width="3" height="55" fill="#dadada" />
<rect x="508" y="654" width="3" height="56" fill="#dadada" />
<rect x="508" y="710" width="3" height="59" fill="#dadada" />
<rect x="508" y="769" width="3" height="59" fill="#dadada" />
<rect x="508" y="828" width="3" height="59" fill="#dadada" />
<rect x="508" y="887" width="3" height="60" fill="#dadada" />
<rect x="508" y="947" width="3" height="59" fill="#dadada" />
<rect x="508" y="1006" width="3" height="59" fill="#dadada" />
<rect x="508" y="1065" width="3" height="59" fill="#dadada" />
<rect x="508" y="1124" width="3" height="59" fill="#dadada" />
<rect x="508" y="1183" width="3" height="59" fill="#dadada" />
<rect x="508" y="1242" width="3" height="59" fill="#dadada" />
<rect x="508" y="1301" width="3" height="59" fill="#dadada" />
<rect x="508" y="1360" width="3" height="59" fill="#dadada" />
<rect x="508" y="1419" width="3" height="59" fill="#dadada" />
<rect x="508" y="1478" width="3" height="59" fill="#dadada" />
<rect x="508" y="1537" width="3" height="59" fill="#dadada" />
<rect x="508" y="1596" width="3" height="59" fill="#dadada" />
<rect x="508" y="1655" width="3" height="59" fill="#dadada" />
<rect x="508" y="1714" width="3" height="59" fill="#dadada" />
<rect x="508" y="1773" width="3" height="55" fill="#dadada" />
<rect x="938" y="654" width="3" height="56" fill="#dadada" />
<rect x="938" y="710" width="3" height="59" fill="#dadada" />
<rect x="938" y="769" width="3" height="59" fill="#dadada" />
<rect x="938" y="828" width="3" height="59" fill="#dadada" />
<rect x="938" y="887" width="3" height="60" fill="#dadada" />
<rect x="938" y="947" width="3" height="59" fill="#dadada" />
<rect x="938" y="1006" width="3" height="59" fill="#dadada" />
<rect x="938" y="1065" width="3" height="59" fill="#dadada" />
<rect x="938" y="1124" width="3" height="59" fill="#dadada" />
<rect x="938" y="1183" width="3" height="59" fill="#dadada" />
<rect x="938" y="1242" width="3" height="59" fill="#dadada" />
<rect x="938" y="1301" width="3" height="59" fill="#dadada" />
<rect x="938" y="1360" width="3" height="59" fill="#dadada" />
<rect x="938" y="1419" width="3" height="59" fill="#dadada" />
<rect x="938" y="1478" width="3" height="59" fill="#dadada" />
<rect x="938" y="1537" width="3" height="59" fill="#dadada" />
<rect x="938" y="1596" width="3" height="59" fill="#dadada" />
<rect x="938" y="1655" width="3" height="59" fill="#dadada" />
<rect x="938" y="1714" width="3" height="59" fill="#dadada" />
<rect x="938" y="1773" width="3" height="55" fill="#dadada" />
<rect x="1130" y="654" width="3" height="56" fill="#dadada" />
<rect x="1130" y="710" width="3" height="59" fill="#dadada" />
<rect x="1130" y="769" width="3" height="59" fill="#dadada" />
<rect x="1130" y="828" width="3" height="59" fill="#dadada" />
<rect x="1130" y="887" width="3" height="60" fill="#dadada" />
<rect x="1130" y="947" width="3" height="59" fill="#dadada" />
<rect x="1130" y="1006" width="3" height="59" fill="#dadada" />
<rect x="1130" y="1065" width="3" height="59" fill="#dadada" />
<rect x="1130" y="1124" width="3" height="59" fill="#dadada" />
<rect x="1130" y="1183" width="3" height="59" fill="#dadada" />
<rect x="1130" y="1242" width="3" height="59" fill="#dadada" />
<rect x="1130" y="1301" width="3" height="59" fill="#dadada" />
<rect x="1130" y="1360" width="3" height="59" fill="#dadada" />
<rect x="1130" y="1419" width="3" height="59" fill="#dadada" />
<rect x="1130" y="1478" width="3" height="59" fill="#dadada" />
<rect x="1130" y="1537" width="3" height="59" fill="#dadada" />
<rect x="1130" y="1596" width="3" height="59" fill="#dadada" />
<rect x="1130" y="1655" width="3" height="59" fill="#dadada" />
<rect x="1130" y="1714" width="3" height="59" fill="#dadada" />
<rect x="1130" y="1773" width="3" height="55" fill="#dadada" />
<rect x="1322" y="654" width="3" height="56" fill="#dadada" />
<rect x="1322" y="1478" width="3" height="59" fill="#dadada" />
<rect x="1322" y="1537" width="3" height="59" fill="#dadada" />
<rect x="1322" y="1596" width="3" height="59" fill="#dadada" />
<rect x="1322" y="1655" width="3" height="59" fill="#dadada" />
<rect x="1322" y="1714" width="3" height="59" fill="#dadada" />
<rect x="1322" y="1773" width="3" height="55" fill="#dadada" />
<rect x="1514" y="654" width="3" height="56" fill="#dadada" />
<rect x="1514" y="710" width="3" height="59" fill="#dadada" />
<rect x="1514" y="769" width="3" height="59" fill="#dadada" />
<rect x="1514" y="828" width="3" height="59" fill="#dadada" />
<rect x="1514" y="887" width="3" height="60" fill="#dadada" />
<rect x="1514" y="947" width="3" height="59" fill="#dadada" />
<rect x="1514" y="1006" width="3" height="59" fill="#dadada" />
<rect x="1514" y="1065" width="3" height="59" fill="#dadada" />
<rect x="1514" y="1124" width="3" height="59" fill="#dadada" />
<rect x="1514" y="1183" width="3" height="59" fill="#dadada" />
<rect x="1514" y="1242" width="3" height="59" fill="#dadada" />
<rect x="1514" y="1301" width="3" height="59" fill="#dadada" />
<rect x="1514" y="1360" width="3" height="59" fill="#dadada" />
<rect x="1514" y="1419" width="3" height="59" fill="#dadada" />
<rect x="1514" y="1478" width="3" height="59" fill="#dadada" />
<rect x="1514" y="1537" width="3" height="59" fill="#dadada" />
<rect x="1514" y="1596" width="3" height="59" fill="#dadada" />
<rect x="1514" y="1655" width="3" height="59" fill="#dadada" />
<rect x="1514" y="1714" width="3" height="59" fill="#dadada" />
<rect x="1514" y="1773" width="3" height="55" fill="#dadada" />
<rect x="1706" y="654" width="3" height="56" fill="#dadada" />
<rect x="1706" y="710" width="3" height="59" fill="#dadada" />
<rect x="1706" y="769" width="3" height="59" fill="#dadada" />
<rect x="1706" y="828" width="3" height="59" fill="#dadada" />
<rect x="1706" y="887" width="3" height="60" fill="#dadada" />
<rect x="1706" y="947" width="3" height="59" fill="#dadada" />
<rect x="1706" y="1006" width="3" height="59" fill="#dadada" />
<rect x="1706" y="1065" width="3" height="59" fill="#dadada" />
<rect x="1706" y="1124" width="3" height="59" fill="#dadada" />
<rect x="1706" y="1183" width="3" height="59" fill="#dadada" />
<rect x="1706" y="1242" width="3" height="59" fill="#dadada" />
<rect x="1706" y="1301" width="3" height="59" fill="#dadada" />
<rect x="1706" y="1360" width="3" height="59" fill="#dadada" />
<rect x="1706" y="1419" width="3" height="59" fill="#dadada" />
<rect x="1706" y="1478" width="3" height="59" fill="#dadada" />
<rect x="1706" y="1537" width="3" height="59" fill="#dadada" />
<rect x="1706" y="1596" width="3" height="59" fill="#dadada" />
<rect x="1706" y="1655" width="3" height="59" fill="#dadada" />
<rect x="1706" y="1714" width="3" height="59" fill="#dadada" />
<rect x="1706" y="1773" width="3" height="55" fill="#dadada" />
<rect x="1898" y="654" width="3" height="56" fill="#dadada" />
<rect x="1898" y="710" width="3" height="59" fill="#dadada" />
<rect x="1898" y="769" width="3" height="59" fill="#dadada" />
<rect x="1898" y="828" width="3" height="59" fill="#dadada" />
<rect x="1898" y="887" width="3" height="60" fill="#dadada" />
<rect x="1898" y="947" width="3" height="59" fill="#dadada" />
<rect x="1898" y="1006" width="3" height="59" fill="#dadada" />
<rect x="1898" y="1065" width="3" height="59" fill="#dadada" />
<rect x="1898" y="1124" width="3" height="59" fill="#dadada" />
<rect x="1898" y="1183" width="3" height="59" fill="#dadada" />
<rect x="1898" y="1242" width="3" height="59" fill="#dadada" />
<rect x="1898" y="1301" width="3" height="59" fill="#dadada" />
<rect x="1898" y="1360" width="3" height="59" fill="#dadada" />
<rect x="1898" y="1419" width="3" height="59" fill="#dadada" />
<rect x="1898" y="1478" width="3" height="59" fill="#dadada" />
<rect x="1898" y="1537" width="3" height="59" fill="#dadada" />
<rect x="1898" y="1596" width="3" height="59" fill="#dadada" />
<rect x="1898" y="1655" width="3" height="59" fill="#dadada" />
<rect x="1898" y="1714" width="3" height="59" fill="#dadada" />
<rect x="1898" y="1773" width="3" height="55" fill="#dadada" />
<rect x="2268" y="654" width="3" height="56" fill="#dadada" />
<rect x="2268" y="710" width="3" height="59" fill="#dadada" />
<rect x="2268" y="769" width="3" height="59" fill="#dadada" />
<rect x="2268" y="828" width="3" height="59" fill="#dadada" />
<rect x="2268" y="887" width="3" height="60" fill="#dadada" />
<rect x="2268" y="947" width="3" height="59" fill="#dadada" />
<rect x="2268" y="1006" width="3" height="59" fill="#dadada" />
<rect x="2268" y="1065" width="3" height="59" fill="#dadada" />
<rect x="2268" y="1124" width="3" height="59" fill="#dadada" />
<rect x="2268" y="1183" width="3" height="59" fill="#dadada" />
<rect x="2268" y="1242" width="3" height="59" fill="#dadada" />
<rect x="2268" y="1301" width="3" height="59" fill="#dadada" />
<rect x="2268" y="1360" width="3" height="59" fill="#dadada" />
<rect x="2268" y="1419" width="3" height="59" fill="#dadada" />
<rect x="2268" y="1478" width="3" height="59" fill="#dadada" />
<rect x="2268" y="1537" width="3" height="59" fill="#dadada" />
<rect x="2268" y="1596" width="3" height="59" fill="#dadada" />
<rect x="2268" y="1655" width="3" height="59" fill="#dadada" />
<rect x="2268" y="1714" width="3" height="59" fill="#dadada" />
<rect x="2268" y="1773" width="3" height="55" fill="#dadada" />
<rect x="2874" y="654" width="3" height="56" fill="#dadada" />
<rect x="2874" y="710" width="3" height="59" fill="#dadada" />
<rect x="2874" y="769" width="3" height="59" fill="#dadada" />
<rect x="2874" y="828" width="3" height="59" fill="#dadada" />
<rect x="2874" y="887" width="3" height="60" fill="#dadada" />
<rect x="2874" y="947" width="3" height="59" fill="#dadada" />
<rect x="2874" y="1006" width="3" height="59" fill="#dadada" />
<rect x="2874" y="1065" width="3" height="59" fill="#dadada" />
<rect x="2874" y="1124" width="3" height="59" fill="#dadada" />
<rect x="2874" y="1183" width="3" height="59" fill="#dadada" />
<rect x="2874" y="1242" width="3" height="59" fill="#dadada" />
<rect x="2874" y="1301" width="3" height="59" fill="#dadada" />
<rect x="2874" y="1360" width="3" height="59" fill="#dadada" />
<rect x="2874" y="1419" width="3" height="59" fill="#dadada" />
<rect x="2874" y="1478" width="3" height="59" fill="#dadada" />
<rect x="2874" y="1537" width="3" height="59" fill="#dadada" />
<rect x="2874" y="1596" width="3" height="59" fill="#dadada" />
<rect x="2874" y="1655" width="3" height="59" fill="#dadada" />
<rect x="2874" y="1714" width="3" height="59" fill="#dadada" />
<rect x="2874" y="1773" width="3" height="55" fill="#dadada" />
<rect x="3066" y="654" width="3" height="56" fill="#dadada" />
<rect x="3066" y="710" width="3" height="59" fill="#dadada" />
<rect x="3066" y="769" width="3" height="59" fill="#dadada" />
<rect x="3066" y="828" width="3" height="59" fill="#dadada" />
<rect x="3066" y="887" width="3" height="60" fill="#dadada" />
<rect x="3066" y="947" width="3" height="59" fill="#dadada" />
<rect x="3066" y="1006" width="3" height="59" fill="#dadada" />
<rect x="3066" y="1065" width="3" height="59" fill="#dadada" />
<rect x="3066" y="1124" width="3" height="59" fill="#dadada" />
<rect x="3066" y="1183" width="3" height="59" fill="#dadada" />
<rect x="3066" y="1242" width="3" height="59" fill="#dadada" />
<rect x="3066" y="1301" width="3" height="59" fill="#dadada" />
<rect x="3066" y="1360" width="3" height="59" fill="#dadada" />
<rect x="3066" y="1419" width="3" height="59" fill="#dadada" />
<rect x="3066" y="1478" width="3" height="59" fill="#dadada" />
<rect x="3066" y="1537" width="3" height="59" fill="#dadada" />
<rect x="3066" y="1596" width="3" height="59" fill="#dadada" />
<rect x="3066" y="1655" width="3" height="59" fill="#dadada" />
<rect x="3066" y="1714" width="3" height="59" fill="#dadada" />
<rect x="3066" y="1773" width="3" height="55" fill="#dadada" />
<rect x="3258" y="654" width="3" height="56" fill="#dadada" />
<rect x="3258" y="710" width="3" height="59" fill="#dadada" />
<rect x="3258" y="769" width="3" height="59" fill="#dadada" />
<rect x="3258" y="828" width="3" height="59" fill="#dadada" />
<rect x="3258" y="887" width="3" height="60" fill="#dadada" />
<rect x="3258" y="947" width="3" height="59" fill="#dadada" />
<rect x="3258" y="1006" width="3" height="59" fill="#dadada" />
<rect x="3258" y="1065" width="3" height="59" fill="#dadada" />
<rect x="3258" y="1124" width="3" height="59" fill="#dadada" />
<rect x="3258" y="1183" width="3" height="59" fill="#dadada" />
<rect x="3258" y="1242" width="3" height="59" fill="#dadada" />
<rect x="3258" y="1301" width="3" height="59" fill="#dadada" />
<rect x="3258" y="1360" width="3" height="59" fill="#dadada" />
<rect x="3258" y="1419" width="3" height="59" fill="#dadada" />
<rect x="3258" y="1478" width="3" height="59" fill="#dadada" />
<rect x="3258" y="1537" width="3" height="59" fill="#dadada" />
<rect x="3258" y="1596" width="3" height="59" fill="#dadada" />
<rect x="3258" y="1655" width="3" height="59" fill="#dadada" />
<rect x="3258" y="1714" width="3" height="59" fill="#dadada" />
<rect x="3258" y="1773" width="3" height="55" fill="#dadada" />
<rect x="3450" y="654" width="3" height="56" fill="#dadada" />
<rect x="3450" y="710" width="3" height="59" fill="#dadada" />
<rect x="3450" y="769" width="3" height="59" fill="#dadada" />
<rect x="3450" y="828" width="3" height="59" fill="#dadada" />
<rect x="3450" y="887" width="3" height="60" fill="#dadada" />
<rect x="3450" y="947" width="3" height="59" fill="#dadada" />
<rect x="3450" y="1006" width="3" height="59" fill="#dadada" />
<rect x="3450" y="1065" width="3" height="59" fill="#dadada" />
<rect x="3450" y="1124" width="3" height="59" fill="#dadada" />
<rect x="3450" y="1183" width="3" height="59" fill="#dadada" />
<rect x="3450" y="1242" width="3" height="59" fill="#dadada" />
<rect x="3450" y="1301" width="3" height="59" fill="#dadada" />
<rect x="3450" y="1360" width="3" height="59" fill="#dadada" />
<rect x="3450" y="1419" width="3" height="59" fill="#dadada" />
<rect x="3450" y="1478" width="3" height="59" fill="#dadada" />
<rect x="3450" y="1537" width="3" height="59" fill="#dadada" />
<rect x="3450" y="1596" width="3" height="59" fill="#dadada" />
<rect x="3450" y="1655" width="3" height="59" fill="#dadada" />
<rect x="3450" y="1714" width="3" height="59" fill="#dadada" />
<rect x="3450" y="1773" width="3" height="55" fill="#dadada" />
<rect x="63" y="651" width="3" height="1177" fill="#9a9a9a" />
<rect x="0" y="704" width="63" height="3" fill="#707070" />
<rect x="0" y="710" width="63" height="3" fill="#707070" />
<rect x="0" y="716" width="63" height="3" fill="#707070" />
<rect x="0" y="769" width="63" height="3" fill="#707070" />
<rect x="0" y="828" width="63" height="3" fill="#707070" />
<rect x="0" y="887" width="63" height="3" fill="#707070" />
<rect x="0" y="947" width="63" height="3" fill="#707070" />
<rect x="0" y="1006" width="63" height="3" fill="#707070" />
<rect x="0" y="1065" width="63" height="3" fill="#707070" />
<rect x="0" y="1124" width="63" height="3" fill="#707070" />
<rect x="0" y="1183" width="63" height="3" fill="#707070" />
<rect x="0" y="1242" width="63" height="3" fill="#707070" />
<rect x="0" y="1301" width="63" height="3" fill="#707070" />
<rect x="0" y="1360" width="63" height="3" fill="#707070" />
<rect x="0" y="1419" width="63" height="3" fill="#707070" />
<rect x="0" y="1472" width="63" height="3" fill="#707070" />
<rect x="0" y="1484" width="63" height="3" fill="#707070" />
<rect x="0" y="1537" width="63" height="3" fill="#707070" />
<rect x="0" y="1596" width="63" height="3" fill="#707070" />
<rect x="0" y="1655" width="63" height="3" fill="#707070" />
<rect x="0" y="1714" width="63" height="3" fill="#707070" />
<rect x="0" y="1773" width="63" height="3" fill="#707070" />
<text x="12.68" y="698.00" font-size="40.50" fill="#e2e2e2">1</text>
<text x="2.02" y="757.00" font-size="40.50" fill="#76f9f9">55</text>
<text x="2.05" y="816.00" font-size="40.50" fill="#76f9f9">56</text>
<text x="2.18" y="875.00" font-size="40.50" fill="#76f9f9">57</text>
<text x="2.05" y="935.00" font-size="40.50" fill="#76f9f9">58</text>
<text x="2.12" y="994.00" font-size="40.50" fill="#76f9f9">59</text>
<text x="1.74" y="1053.00" font-size="40.50" fill="#76f9f9">60</text>
<text x="1.94" y="1112.00" font-size="40.50" fill="#76f9f9">61</text>
<text x="1.97" y="1171.00" font-size="40.50" fill="#76f9f9">62</text>
<text x="1.84" y="1230.00" font-size="40.50" fill="#76f9f9">63</text>
<text x="1.54" y="1289.00" font-size="40.50" fill="#76f9f9">64</text>
<text x="1.80" y="1348.00" font-size="40.50" fill="#76f9f9">65</text>
<text x="1.84" y="1407.00" font-size="40.50" fill="#76f9f9">66</text>
<text x="1.97" y="1466.00" font-size="40.50" fill="#76f9f9">67</text>
<text x="-9.04" y="1525.00" font-size="40.50" fill="#e2e2e2">342</text>
<text x="-9.17" y="1584.00" font-size="40.50" fill="#e2e2e2">343</text>
<text x="-9.46" y="1643.00" font-size="40.50" fill="#e2e2e2">344</text>
<text x="-9.21" y="1702.00" font-size="40.50" fill="#e2e2e2">345</text>
<text x="-9.17" y="1761.00" font-size="40.50" fill="#e2e2e2">346</text>
<text x="-9.04" y="1820.00" font-size="40.50" fill="#e2e2e2">347</text>
<defs><clipPath id="cE"><rect x="66" y="654" width="250" height="1174"/></clipPath><clipPath id="cF"><rect x="319" y="654" width="189" height="1174"/></clipPath><clipPath id="cG"><rect x="511" y="654" width="427" height="1174"/></clipPath><clipPath id="cH"><rect x="941" y="654" width="189" height="1174"/></clipPath><clipPath id="cI"><rect x="1133" y="654" width="189" height="1174"/></clipPath><clipPath id="cJ"><rect x="1325" y="654" width="189" height="1174"/></clipPath><clipPath id="cK"><rect x="1517" y="654" width="189" height="1174"/></clipPath><clipPath id="cL"><rect x="1709" y="654" width="189" height="1174"/></clipPath><clipPath id="cM"><rect x="1901" y="654" width="367" height="1174"/></clipPath><clipPath id="cN"><rect x="2271" y="654" width="603" height="1174"/></clipPath><clipPath id="cO"><rect x="2877" y="654" width="189" height="1174"/></clipPath><clipPath id="cP"><rect x="3069" y="654" width="189" height="1174"/></clipPath><clipPath id="cQ"><rect x="3261" y="654" width="189" height="1174"/></clipPath><clipPath id="cR"><rect x="3453" y="654" width="305" height="1174"/></clipPath><clipPath id="cIJ"><rect x="1133" y="654" width="381" height="1174"/></clipPath></defs>
<text x="71.0" y="698.0" font-size="41" fill="#000" textLength="224.4" lengthAdjust="spacingAndGlyphs" clip-path="url(#cE)">total-amount</text>
<text x="324.0" y="698.0" font-size="41" fill="#000" textLength="154.5" lengthAdjust="spacingAndGlyphs" clip-path="url(#cF)">currency</text>
<text x="516.0" y="698.0" font-size="41" fill="#000" textLength="287.0" lengthAdjust="spacingAndGlyphs" clip-path="url(#cG)">transaction-type</text>
<text x="946.0" y="698.0" font-size="41" fill="#000" textLength="139.2" lengthAdjust="spacingAndGlyphs" clip-path="url(#cH)">order-id</text>
<text x="1138.0" y="698.0" font-size="41" fill="#000" textLength="321.0" lengthAdjust="spacingAndGlyphs" clip-path="url(#cI)">merchant-order-id</text>
<text x="1330.0" y="698.0" font-size="41" fill="#000" textLength="242.3" lengthAdjust="spacingAndGlyphs" clip-path="url(#cJ)">adjustment-id</text>
<text x="1522.0" y="698.0" font-size="41" fill="#000" textLength="208.7" lengthAdjust="spacingAndGlyphs" clip-path="url(#cK)">shipment-id</text>
<text x="1714.0" y="698.0" font-size="41" fill="#000" textLength="334.0" lengthAdjust="spacingAndGlyphs" clip-path="url(#cL)">marketplace-name</text>
<text x="1906.0" y="698.0" font-size="41" fill="#000" textLength="224.4" lengthAdjust="spacingAndGlyphs" clip-path="url(#cM)">amount-type</text>
<text x="2276.0" y="698.0" font-size="41" fill="#000" textLength="343.0" lengthAdjust="spacingAndGlyphs" clip-path="url(#cN)">amount-description</text>
<text x="2882.0" y="698.0" font-size="41" fill="#000" textLength="134.4" lengthAdjust="spacingAndGlyphs" clip-path="url(#cO)">amount</text>
<text x="3074.0" y="698.0" font-size="41" fill="#000" textLength="215.3" lengthAdjust="spacingAndGlyphs" clip-path="url(#cP)">fulfillment-id</text>
<text x="3266.0" y="698.0" font-size="41" fill="#000" textLength="213.2" lengthAdjust="spacingAndGlyphs" clip-path="url(#cQ)">posted-date</text>
<text x="3458.0" y="698.0" font-size="41" fill="#000" textLength="303.1" lengthAdjust="spacingAndGlyphs" clip-path="url(#cR)">posted-date-time</text>
<rect x="265.5" y="656.5" width="50" height="50" fill="#fff" stroke="#a6a6a6" stroke-width="1"/>
<path d="M280 677 H300 L290 687 Z" fill="#767676"/>
<rect x="457.5" y="656.5" width="50" height="50" fill="#fff" stroke="#a6a6a6" stroke-width="1"/>
<path d="M472 677 H492 L482 687 Z" fill="#767676"/>
<rect x="887.5" y="656.5" width="50" height="50" fill="#fff" stroke="#a6a6a6" stroke-width="1"/>
<path d="M902 677 H922 L912 687 Z" fill="#767676"/>
<rect x="1079.5" y="656.5" width="50" height="50" fill="#fff" stroke="#a6a6a6" stroke-width="1"/>
<path d="M1096 668 H1122 L1112 679.5 V691 H1106 V679.5 Z" fill="#767676"/>
<path d="M1086 685 H1100 L1093 692 Z" fill="#767676"/>
<rect x="1271.5" y="656.5" width="50" height="50" fill="#fff" stroke="#a6a6a6" stroke-width="1"/>
<path d="M1286 677 H1306 L1296 687 Z" fill="#767676"/>
<rect x="1463.5" y="656.5" width="50" height="50" fill="#fff" stroke="#a6a6a6" stroke-width="1"/>
<path d="M1478 677 H1498 L1488 687 Z" fill="#767676"/>
<rect x="1655.5" y="656.5" width="50" height="50" fill="#fff" stroke="#a6a6a6" stroke-width="1"/>
<path d="M1670 677 H1690 L1680 687 Z" fill="#767676"/>
<rect x="1847.5" y="656.5" width="50" height="50" fill="#fff" stroke="#a6a6a6" stroke-width="1"/>
<path d="M1862 677 H1882 L1872 687 Z" fill="#767676"/>
<rect x="2217.5" y="656.5" width="50" height="50" fill="#fff" stroke="#a6a6a6" stroke-width="1"/>
<path d="M2232 677 H2252 L2242 687 Z" fill="#767676"/>
<rect x="2823.5" y="656.5" width="50" height="50" fill="#fff" stroke="#a6a6a6" stroke-width="1"/>
<path d="M2838 677 H2858 L2848 687 Z" fill="#767676"/>
<rect x="3015.5" y="656.5" width="50" height="50" fill="#fff" stroke="#a6a6a6" stroke-width="1"/>
<path d="M3030 677 H3050 L3040 687 Z" fill="#767676"/>
<rect x="3207.5" y="656.5" width="50" height="50" fill="#fff" stroke="#a6a6a6" stroke-width="1"/>
<path d="M3222 677 H3242 L3232 687 Z" fill="#767676"/>
<rect x="3399.5" y="656.5" width="50" height="50" fill="#fff" stroke="#a6a6a6" stroke-width="1"/>
<path d="M3414 677 H3434 L3424 687 Z" fill="#767676"/>
<text x="516.0" y="757.0" font-size="41" fill="#000" textLength="99.8" lengthAdjust="spacingAndGlyphs" clip-path="url(#cG)">Order</text>
<text x="946.0" y="757.0" font-size="41" fill="#000" textLength="397.7" lengthAdjust="spacingAndGlyphs" clip-path="url(#cH)">171-1184433-1964301</text>
<text x="1138.0" y="757.0" font-size="41" fill="#000" textLength="375.9" lengthAdjust="spacingAndGlyphs" clip-path="url(#cIJ)">171-1184433-196430</text>
<text x="1522.0" y="757.0" font-size="41" fill="#000" textLength="251.8" lengthAdjust="spacingAndGlyphs" clip-path="url(#cK)">UwgfSXDwXr7</text>
<text x="1714.0" y="757.0" font-size="41" fill="#000" textLength="188.0" lengthAdjust="spacingAndGlyphs" clip-path="url(#cL)">Amazon.in</text>
<text x="1906.0" y="757.0" font-size="41" fill="#000" textLength="166.3" lengthAdjust="spacingAndGlyphs" clip-path="url(#cM)">ItemPrice</text>
<text x="2276.0" y="757.0" font-size="41" fill="#000" textLength="151.8" lengthAdjust="spacingAndGlyphs" clip-path="url(#cN)">Principal</text>
<text x="3060.0" y="757.0" font-size="41" fill="#000" text-anchor="end" textLength="142.1" lengthAdjust="spacingAndGlyphs" clip-path="url(#cO)">5493.22</text>
<text x="3074.0" y="757.0" font-size="41" fill="#000" textLength="72.4" lengthAdjust="spacingAndGlyphs" clip-path="url(#cP)">AFN</text>
<text x="3266.0" y="757.0" font-size="41" fill="#000" textLength="357.0" lengthAdjust="spacingAndGlyphs" clip-path="url(#cQ)">24.05.2023 10:48:01</text>
<text x="3458.0" y="757.0" font-size="41" fill="#000" textLength="437.6" lengthAdjust="spacingAndGlyphs" clip-path="url(#cR)">24.05.2023 10:48:01 UTC</text>
<text x="516.0" y="816.0" font-size="41" fill="#000" textLength="99.8" lengthAdjust="spacingAndGlyphs" clip-path="url(#cG)">Order</text>
<text x="946.0" y="816.0" font-size="41" fill="#000" textLength="397.7" lengthAdjust="spacingAndGlyphs" clip-path="url(#cH)">171-1184433-1964301</text>
<text x="1138.0" y="816.0" font-size="41" fill="#000" textLength="375.9" lengthAdjust="spacingAndGlyphs" clip-path="url(#cIJ)">171-1184433-196430</text>
<text x="1522.0" y="816.0" font-size="41" fill="#000" textLength="251.8" lengthAdjust="spacingAndGlyphs" clip-path="url(#cK)">UwgfSXDwXr7</text>
<text x="1714.0" y="816.0" font-size="41" fill="#000" textLength="188.0" lengthAdjust="spacingAndGlyphs" clip-path="url(#cL)">Amazon.in</text>
<text x="1906.0" y="816.0" font-size="41" fill="#000" textLength="166.3" lengthAdjust="spacingAndGlyphs" clip-path="url(#cM)">ItemPrice</text>
<text x="2276.0" y="816.0" font-size="41" fill="#000" textLength="207.0" lengthAdjust="spacingAndGlyphs" clip-path="url(#cN)">Product Tax</text>
<text x="3060.0" y="816.0" font-size="41" fill="#000" text-anchor="end" textLength="120.4" lengthAdjust="spacingAndGlyphs" clip-path="url(#cO)">988.78</text>
<text x="3074.0" y="816.0" font-size="41" fill="#000" textLength="72.4" lengthAdjust="spacingAndGlyphs" clip-path="url(#cP)">AFN</text>
<text x="3266.0" y="816.0" font-size="41" fill="#000" textLength="357.0" lengthAdjust="spacingAndGlyphs" clip-path="url(#cQ)">24.05.2023 10:48:01</text>
<text x="3458.0" y="816.0" font-size="41" fill="#000" textLength="437.6" lengthAdjust="spacingAndGlyphs" clip-path="url(#cR)">24.05.2023 10:48:01 UTC</text>
<text x="516.0" y="875.0" font-size="41" fill="#000" textLength="99.8" lengthAdjust="spacingAndGlyphs" clip-path="url(#cG)">Order</text>
<text x="946.0" y="875.0" font-size="41" fill="#000" textLength="397.7" lengthAdjust="spacingAndGlyphs" clip-path="url(#cH)">171-1184433-1964301</text>
<text x="1138.0" y="875.0" font-size="41" fill="#000" textLength="375.9" lengthAdjust="spacingAndGlyphs" clip-path="url(#cIJ)">171-1184433-196430</text>
<text x="1522.0" y="875.0" font-size="41" fill="#000" textLength="251.8" lengthAdjust="spacingAndGlyphs" clip-path="url(#cK)">UwgfSXDwXr7</text>
<text x="1714.0" y="875.0" font-size="41" fill="#000" textLength="188.0" lengthAdjust="spacingAndGlyphs" clip-path="url(#cL)">Amazon.in</text>
<text x="1906.0" y="875.0" font-size="41" fill="#000" textLength="149.7" lengthAdjust="spacingAndGlyphs" clip-path="url(#cM)">ItemTCS</text>
<text x="2276.0" y="875.0" font-size="41" fill="#000" textLength="170.8" lengthAdjust="spacingAndGlyphs" clip-path="url(#cN)">TCS-IGST</text>
<text x="3060.0" y="875.0" font-size="41" fill="#000" text-anchor="end" textLength="112.4" lengthAdjust="spacingAndGlyphs" clip-path="url(#cO)">-54.93</text>
<text x="3074.0" y="875.0" font-size="41" fill="#000" textLength="72.4" lengthAdjust="spacingAndGlyphs" clip-path="url(#cP)">AFN</text>
<text x="3266.0" y="875.0" font-size="41" fill="#000" textLength="357.0" lengthAdjust="spacingAndGlyphs" clip-path="url(#cQ)">24.05.2023 10:48:01</text>
<text x="3458.0" y="875.0" font-size="41" fill="#000" textLength="437.6" lengthAdjust="spacingAndGlyphs" clip-path="url(#cR)">24.05.2023 10:48:01 UTC</text>
<text x="516.0" y="935.0" font-size="41" fill="#000" textLength="99.8" lengthAdjust="spacingAndGlyphs" clip-path="url(#cG)">Order</text>
<text x="946.0" y="935.0" font-size="41" fill="#000" textLength="397.7" lengthAdjust="spacingAndGlyphs" clip-path="url(#cH)">171-1184433-1964301</text>
<text x="1138.0" y="935.0" font-size="41" fill="#000" textLength="375.9" lengthAdjust="spacingAndGlyphs" clip-path="url(#cIJ)">171-1184433-196430</text>
<text x="1522.0" y="935.0" font-size="41" fill="#000" textLength="251.8" lengthAdjust="spacingAndGlyphs" clip-path="url(#cK)">UwgfSXDwXr7</text>
<text x="1714.0" y="935.0" font-size="41" fill="#000" textLength="188.0" lengthAdjust="spacingAndGlyphs" clip-path="url(#cL)">Amazon.in</text>
<text x="1906.0" y="935.0" font-size="41" fill="#000" textLength="149.7" lengthAdjust="spacingAndGlyphs" clip-path="url(#cM)">ItemTDS</text>
<text x="2276.0" y="935.0" font-size="41" fill="#000" textLength="351.3" lengthAdjust="spacingAndGlyphs" clip-path="url(#cN)">TDS (Section 194-O)</text>
<text x="3060.0" y="935.0" font-size="41" fill="#000" text-anchor="end" textLength="112.4" lengthAdjust="spacingAndGlyphs" clip-path="url(#cO)">-54.94</text>
<text x="3074.0" y="935.0" font-size="41" fill="#000" textLength="72.4" lengthAdjust="spacingAndGlyphs" clip-path="url(#cP)">AFN</text>
<text x="3266.0" y="935.0" font-size="41" fill="#000" textLength="357.0" lengthAdjust="spacingAndGlyphs" clip-path="url(#cQ)">24.05.2023 10:48:01</text>
<text x="3458.0" y="935.0" font-size="41" fill="#000" textLength="437.6" lengthAdjust="spacingAndGlyphs" clip-path="url(#cR)">24.05.2023 10:48:01 UTC</text>
<text x="516.0" y="994.0" font-size="41" fill="#000" textLength="99.8" lengthAdjust="spacingAndGlyphs" clip-path="url(#cG)">Order</text>
<text x="946.0" y="994.0" font-size="41" fill="#000" textLength="397.7" lengthAdjust="spacingAndGlyphs" clip-path="url(#cH)">171-1184433-1964301</text>
<text x="1138.0" y="994.0" font-size="41" fill="#000" textLength="375.9" lengthAdjust="spacingAndGlyphs" clip-path="url(#cIJ)">171-1184433-196430</text>
<text x="1522.0" y="994.0" font-size="41" fill="#000" textLength="251.8" lengthAdjust="spacingAndGlyphs" clip-path="url(#cK)">UwgfSXDwXr7</text>
<text x="1714.0" y="994.0" font-size="41" fill="#000" textLength="188.0" lengthAdjust="spacingAndGlyphs" clip-path="url(#cL)">Amazon.in</text>
<text x="1906.0" y="994.0" font-size="41" fill="#000" textLength="164.3" lengthAdjust="spacingAndGlyphs" clip-path="url(#cM)">ItemFees</text>
<text x="2276.0" y="994.0" font-size="41" fill="#000" textLength="433.5" lengthAdjust="spacingAndGlyphs" clip-path="url(#cN)">FBA Weight Handling Fee</text>
<text x="3060.0" y="994.0" font-size="41" fill="#000" text-anchor="end" textLength="100.9" lengthAdjust="spacingAndGlyphs" clip-path="url(#cO)">-1007</text>
<text x="3074.0" y="994.0" font-size="41" fill="#000" textLength="72.4" lengthAdjust="spacingAndGlyphs" clip-path="url(#cP)">AFN</text>
<text x="3266.0" y="994.0" font-size="41" fill="#000" textLength="357.0" lengthAdjust="spacingAndGlyphs" clip-path="url(#cQ)">24.05.2023 10:48:01</text>
<text x="3458.0" y="994.0" font-size="41" fill="#000" textLength="437.6" lengthAdjust="spacingAndGlyphs" clip-path="url(#cR)">24.05.2023 10:48:01 UTC</text>
<text x="516.0" y="1053.0" font-size="41" fill="#000" textLength="99.8" lengthAdjust="spacingAndGlyphs" clip-path="url(#cG)">Order</text>
<text x="946.0" y="1053.0" font-size="41" fill="#000" textLength="397.7" lengthAdjust="spacingAndGlyphs" clip-path="url(#cH)">171-1184433-1964301</text>
<text x="1138.0" y="1053.0" font-size="41" fill="#000" textLength="375.9" lengthAdjust="spacingAndGlyphs" clip-path="url(#cIJ)">171-1184433-196430</text>
<text x="1522.0" y="1053.0" font-size="41" fill="#000" textLength="251.8" lengthAdjust="spacingAndGlyphs" clip-path="url(#cK)">UwgfSXDwXr7</text>
<text x="1714.0" y="1053.0" font-size="41" fill="#000" textLength="188.0" lengthAdjust="spacingAndGlyphs" clip-path="url(#cL)">Amazon.in</text>
<text x="1906.0" y="1053.0" font-size="41" fill="#000" textLength="164.3" lengthAdjust="spacingAndGlyphs" clip-path="url(#cM)">ItemFees</text>
<text x="2276.0" y="1053.0" font-size="41" fill="#000" textLength="540.2" lengthAdjust="spacingAndGlyphs" clip-path="url(#cN)">FBA Weight Handling Fee CGST</text>
<text x="3060.0" y="1053.0" font-size="41" fill="#000" text-anchor="end" textLength="112.4" lengthAdjust="spacingAndGlyphs" clip-path="url(#cO)">-90.63</text>
<text x="3074.0" y="1053.0" font-size="41" fill="#000" textLength="72.4" lengthAdjust="spacingAndGlyphs" clip-path="url(#cP)">AFN</text>
<text x="3266.0" y="1053.0" font-size="41" fill="#000" textLength="357.0" lengthAdjust="spacingAndGlyphs" clip-path="url(#cQ)">24.05.2023 10:48:01</text>
<text x="3458.0" y="1053.0" font-size="41" fill="#000" textLength="437.6" lengthAdjust="spacingAndGlyphs" clip-path="url(#cR)">24.05.2023 10:48:01 UTC</text>
<text x="516.0" y="1112.0" font-size="41" fill="#000" textLength="99.8" lengthAdjust="spacingAndGlyphs" clip-path="url(#cG)">Order</text>
<text x="946.0" y="1112.0" font-size="41" fill="#000" textLength="397.7" lengthAdjust="spacingAndGlyphs" clip-path="url(#cH)">171-1184433-1964301</text>
<text x="1138.0" y="1112.0" font-size="41" fill="#000" textLength="375.9" lengthAdjust="spacingAndGlyphs" clip-path="url(#cIJ)">171-1184433-196430</text>
<text x="1522.0" y="1112.0" font-size="41" fill="#000" textLength="251.8" lengthAdjust="spacingAndGlyphs" clip-path="url(#cK)">UwgfSXDwXr7</text>
<text x="1714.0" y="1112.0" font-size="41" fill="#000" textLength="188.0" lengthAdjust="spacingAndGlyphs" clip-path="url(#cL)">Amazon.in</text>
<text x="1906.0" y="1112.0" font-size="41" fill="#000" textLength="164.3" lengthAdjust="spacingAndGlyphs" clip-path="url(#cM)">ItemFees</text>
<text x="2276.0" y="1112.0" font-size="41" fill="#000" textLength="538.2" lengthAdjust="spacingAndGlyphs" clip-path="url(#cN)">FBA Weight Handling Fee SGST</text>
<text x="3060.0" y="1112.0" font-size="41" fill="#000" text-anchor="end" textLength="112.4" lengthAdjust="spacingAndGlyphs" clip-path="url(#cO)">-90.63</text>
<text x="3074.0" y="1112.0" font-size="41" fill="#000" textLength="72.4" lengthAdjust="spacingAndGlyphs" clip-path="url(#cP)">AFN</text>
<text x="3266.0" y="1112.0" font-size="41" fill="#000" textLength="357.0" lengthAdjust="spacingAndGlyphs" clip-path="url(#cQ)">24.05.2023 10:48:01</text>
<text x="3458.0" y="1112.0" font-size="41" fill="#000" textLength="437.6" lengthAdjust="spacingAndGlyphs" clip-path="url(#cR)">24.05.2023 10:48:01 UTC</text>
<text x="516.0" y="1171.0" font-size="41" fill="#000" textLength="99.8" lengthAdjust="spacingAndGlyphs" clip-path="url(#cG)">Order</text>
<text x="946.0" y="1171.0" font-size="41" fill="#000" textLength="397.7" lengthAdjust="spacingAndGlyphs" clip-path="url(#cH)">171-1184433-1964301</text>
<text x="1138.0" y="1171.0" font-size="41" fill="#000" textLength="375.9" lengthAdjust="spacingAndGlyphs" clip-path="url(#cIJ)">171-1184433-196430</text>
<text x="1522.0" y="1171.0" font-size="41" fill="#000" textLength="251.8" lengthAdjust="spacingAndGlyphs" clip-path="url(#cK)">UwgfSXDwXr7</text>
<text x="1714.0" y="1171.0" font-size="41" fill="#000" textLength="188.0" lengthAdjust="spacingAndGlyphs" clip-path="url(#cL)">Amazon.in</text>
<text x="1906.0" y="1171.0" font-size="41" fill="#000" textLength="164.3" lengthAdjust="spacingAndGlyphs" clip-path="url(#cM)">ItemFees</text>
<text x="2276.0" y="1171.0" font-size="41" fill="#000" textLength="278.9" lengthAdjust="spacingAndGlyphs" clip-path="url(#cN)">Technology Fee</text>
<text x="3060.0" y="1171.0" font-size="41" fill="#000" text-anchor="end" textLength="57.4" lengthAdjust="spacingAndGlyphs" clip-path="url(#cO)">-13</text>
<text x="3074.0" y="1171.0" font-size="41" fill="#000" textLength="72.4" lengthAdjust="spacingAndGlyphs" clip-path="url(#cP)">AFN</text>
<text x="3266.0" y="1171.0" font-size="41" fill="#000" textLength="357.0" lengthAdjust="spacingAndGlyphs" clip-path="url(#cQ)">24.05.2023 10:48:01</text>
<text x="3458.0" y="1171.0" font-size="41" fill="#000" textLength="437.6" lengthAdjust="spacingAndGlyphs" clip-path="url(#cR)">24.05.2023 10:48:01 UTC</text>
<text x="516.0" y="1230.0" font-size="41" fill="#000" textLength="99.8" lengthAdjust="spacingAndGlyphs" clip-path="url(#cG)">Order</text>
<text x="946.0" y="1230.0" font-size="41" fill="#000" textLength="397.7" lengthAdjust="spacingAndGlyphs" clip-path="url(#cH)">171-1184433-1964301</text>
<text x="1138.0" y="1230.0" font-size="41" fill="#000" textLength="375.9" lengthAdjust="spacingAndGlyphs" clip-path="url(#cIJ)">171-1184433-196430</text>
<text x="1522.0" y="1230.0" font-size="41" fill="#000" textLength="251.8" lengthAdjust="spacingAndGlyphs" clip-path="url(#cK)">UwgfSXDwXr7</text>
<text x="1714.0" y="1230.0" font-size="41" fill="#000" textLength="188.0" lengthAdjust="spacingAndGlyphs" clip-path="url(#cL)">Amazon.in</text>
<text x="1906.0" y="1230.0" font-size="41" fill="#000" textLength="164.3" lengthAdjust="spacingAndGlyphs" clip-path="url(#cM)">ItemFees</text>
<text x="2276.0" y="1230.0" font-size="41" fill="#000" textLength="369.6" lengthAdjust="spacingAndGlyphs" clip-path="url(#cN)">Technology Fee IGST</text>
<text x="3060.0" y="1230.0" font-size="41" fill="#000" text-anchor="end" textLength="90.6" lengthAdjust="spacingAndGlyphs" clip-path="url(#cO)">-2.34</text>
<text x="3074.0" y="1230.0" font-size="41" fill="#000" textLength="72.4" lengthAdjust="spacingAndGlyphs" clip-path="url(#cP)">AFN</text>
<text x="3266.0" y="1230.0" font-size="41" fill="#000" textLength="357.0" lengthAdjust="spacingAndGlyphs" clip-path="url(#cQ)">24.05.2023 10:48:01</text>
<text x="3458.0" y="1230.0" font-size="41" fill="#000" textLength="437.6" lengthAdjust="spacingAndGlyphs" clip-path="url(#cR)">24.05.2023 10:48:01 UTC</text>
<text x="516.0" y="1289.0" font-size="41" fill="#000" textLength="99.8" lengthAdjust="spacingAndGlyphs" clip-path="url(#cG)">Order</text>
<text x="946.0" y="1289.0" font-size="41" fill="#000" textLength="397.7" lengthAdjust="spacingAndGlyphs" clip-path="url(#cH)">171-1184433-1964301</text>
<text x="1138.0" y="1289.0" font-size="41" fill="#000" textLength="375.9" lengthAdjust="spacingAndGlyphs" clip-path="url(#cIJ)">171-1184433-196430</text>
<text x="1522.0" y="1289.0" font-size="41" fill="#000" textLength="251.8" lengthAdjust="spacingAndGlyphs" clip-path="url(#cK)">UwgfSXDwXr7</text>
<text x="1714.0" y="1289.0" font-size="41" fill="#000" textLength="188.0" lengthAdjust="spacingAndGlyphs" clip-path="url(#cL)">Amazon.in</text>
<text x="1906.0" y="1289.0" font-size="41" fill="#000" textLength="164.3" lengthAdjust="spacingAndGlyphs" clip-path="url(#cM)">ItemFees</text>
<text x="2276.0" y="1289.0" font-size="41" fill="#000" textLength="218.7" lengthAdjust="spacingAndGlyphs" clip-path="url(#cN)">Commission</text>
<text x="3060.0" y="1289.0" font-size="41" fill="#000" text-anchor="end" textLength="156.0" lengthAdjust="spacingAndGlyphs" clip-path="url(#cO)">-1037.12</text>
<text x="3074.0" y="1289.0" font-size="41" fill="#000" textLength="72.4" lengthAdjust="spacingAndGlyphs" clip-path="url(#cP)">AFN</text>
<text x="3266.0" y="1289.0" font-size="41" fill="#000" textLength="357.0" lengthAdjust="spacingAndGlyphs" clip-path="url(#cQ)">24.05.2023 10:48:01</text>
<text x="3458.0" y="1289.0" font-size="41" fill="#000" textLength="437.6" lengthAdjust="spacingAndGlyphs" clip-path="url(#cR)">24.05.2023 10:48:01 UTC</text>
<text x="516.0" y="1348.0" font-size="41" fill="#000" textLength="99.8" lengthAdjust="spacingAndGlyphs" clip-path="url(#cG)">Order</text>
<text x="946.0" y="1348.0" font-size="41" fill="#000" textLength="397.7" lengthAdjust="spacingAndGlyphs" clip-path="url(#cH)">171-1184433-1964301</text>
<text x="1138.0" y="1348.0" font-size="41" fill="#000" textLength="375.9" lengthAdjust="spacingAndGlyphs" clip-path="url(#cIJ)">171-1184433-196430</text>
<text x="1522.0" y="1348.0" font-size="41" fill="#000" textLength="251.8" lengthAdjust="spacingAndGlyphs" clip-path="url(#cK)">UwgfSXDwXr7</text>
<text x="1714.0" y="1348.0" font-size="41" fill="#000" textLength="188.0" lengthAdjust="spacingAndGlyphs" clip-path="url(#cL)">Amazon.in</text>
<text x="1906.0" y="1348.0" font-size="41" fill="#000" textLength="164.3" lengthAdjust="spacingAndGlyphs" clip-path="url(#cM)">ItemFees</text>
<text x="2276.0" y="1348.0" font-size="41" fill="#000" textLength="309.4" lengthAdjust="spacingAndGlyphs" clip-path="url(#cN)">Commission IGST</text>
<text x="3060.0" y="1348.0" font-size="41" fill="#000" text-anchor="end" textLength="134.2" lengthAdjust="spacingAndGlyphs" clip-path="url(#cO)">-186.68</text>
<text x="3074.0" y="1348.0" font-size="41" fill="#000" textLength="72.4" lengthAdjust="spacingAndGlyphs" clip-path="url(#cP)">AFN</text>
<text x="3266.0" y="1348.0" font-size="41" fill="#000" textLength="357.0" lengthAdjust="spacingAndGlyphs" clip-path="url(#cQ)">24.05.2023 10:48:01</text>
<text x="3458.0" y="1348.0" font-size="41" fill="#000" textLength="437.6" lengthAdjust="spacingAndGlyphs" clip-path="url(#cR)">24.05.2023 10:48:01 UTC</text>
<text x="516.0" y="1407.0" font-size="41" fill="#000" textLength="99.8" lengthAdjust="spacingAndGlyphs" clip-path="url(#cG)">Order</text>
<text x="946.0" y="1407.0" font-size="41" fill="#000" textLength="397.7" lengthAdjust="spacingAndGlyphs" clip-path="url(#cH)">171-1184433-1964301</text>
<text x="1138.0" y="1407.0" font-size="41" fill="#000" textLength="375.9" lengthAdjust="spacingAndGlyphs" clip-path="url(#cIJ)">171-1184433-196430</text>
<text x="1522.0" y="1407.0" font-size="41" fill="#000" textLength="251.8" lengthAdjust="spacingAndGlyphs" clip-path="url(#cK)">UwgfSXDwXr7</text>
<text x="1714.0" y="1407.0" font-size="41" fill="#000" textLength="188.0" lengthAdjust="spacingAndGlyphs" clip-path="url(#cL)">Amazon.in</text>
<text x="1906.0" y="1407.0" font-size="41" fill="#000" textLength="164.3" lengthAdjust="spacingAndGlyphs" clip-path="url(#cM)">ItemFees</text>
<text x="2276.0" y="1407.0" font-size="41" fill="#000" textLength="289.8" lengthAdjust="spacingAndGlyphs" clip-path="url(#cN)">Fixed closing fee</text>
<text x="3060.0" y="1407.0" font-size="41" fill="#000" text-anchor="end" textLength="57.4" lengthAdjust="spacingAndGlyphs" clip-path="url(#cO)">-58</text>
<text x="3074.0" y="1407.0" font-size="41" fill="#000" textLength="72.4" lengthAdjust="spacingAndGlyphs" clip-path="url(#cP)">AFN</text>
<text x="3266.0" y="1407.0" font-size="41" fill="#000" textLength="357.0" lengthAdjust="spacingAndGlyphs" clip-path="url(#cQ)">24.05.2023 10:48:01</text>
<text x="3458.0" y="1407.0" font-size="41" fill="#000" textLength="437.6" lengthAdjust="spacingAndGlyphs" clip-path="url(#cR)">24.05.2023 10:48:01 UTC</text>
<text x="516.0" y="1466.0" font-size="41" fill="#000" textLength="99.8" lengthAdjust="spacingAndGlyphs" clip-path="url(#cG)">Order</text>
<text x="946.0" y="1466.0" font-size="41" fill="#000" textLength="397.7" lengthAdjust="spacingAndGlyphs" clip-path="url(#cH)">171-1184433-1964301</text>
<text x="1138.0" y="1466.0" font-size="41" fill="#000" textLength="375.9" lengthAdjust="spacingAndGlyphs" clip-path="url(#cIJ)">171-1184433-196430</text>
<text x="1522.0" y="1466.0" font-size="41" fill="#000" textLength="251.8" lengthAdjust="spacingAndGlyphs" clip-path="url(#cK)">UwgfSXDwXr7</text>
<text x="1714.0" y="1466.0" font-size="41" fill="#000" textLength="188.0" lengthAdjust="spacingAndGlyphs" clip-path="url(#cL)">Amazon.in</text>
<text x="1906.0" y="1466.0" font-size="41" fill="#000" textLength="164.3" lengthAdjust="spacingAndGlyphs" clip-path="url(#cM)">ItemFees</text>
<text x="2276.0" y="1466.0" font-size="41" fill="#000" textLength="380.4" lengthAdjust="spacingAndGlyphs" clip-path="url(#cN)">Fixed closing fee IGST</text>
<text x="3060.0" y="1466.0" font-size="41" fill="#000" text-anchor="end" textLength="112.4" lengthAdjust="spacingAndGlyphs" clip-path="url(#cO)">-10.44</text>
<text x="3074.0" y="1466.0" font-size="41" fill="#000" textLength="72.4" lengthAdjust="spacingAndGlyphs" clip-path="url(#cP)">AFN</text>
<text x="3266.0" y="1466.0" font-size="41" fill="#000" textLength="357.0" lengthAdjust="spacingAndGlyphs" clip-path="url(#cQ)">24.05.2023 10:48:01</text>
<text x="3458.0" y="1466.0" font-size="41" fill="#000" textLength="437.6" lengthAdjust="spacingAndGlyphs" clip-path="url(#cR)">24.05.2023 10:48:01 UTC</text>
<rect x="3758" y="651" width="3" height="1177" fill="#3c3c3c" />
<path d="M3769 1828 V616 A21 21 0 0 1 3811 616 V1828 Z" fill="#171717"/>
<path d="M3794.6 611 L3807.5 629.5 H3781.7 Z" fill="#9a9a9a" stroke="#9a9a9a" stroke-width="2" stroke-linejoin="round"/>
<path d="M3782 1828 V658 A12.5 12.5 0 0 1 3807 658 V1828 Z" fill="#9a9a9a"/>
<rect x="3807" y="654" width="1" height="1174" fill="#0f0f0f" />
<rect x="3813" y="0" width="1" height="1828" fill="#000" />
<rect x="0" y="1827" width="3814" height="1" fill="#000" />
<rect x="0" y="0" width="3813" height="2" fill="#ff0000" />
<rect x="0" y="0" width="2" height="1827" fill="#ff0000" />
<rect x="3811" y="0" width="2" height="1827" fill="#ff0000" />
<rect x="0" y="1825" width="3813" height="2" fill="#ff0000" />
</svg></body></html>
